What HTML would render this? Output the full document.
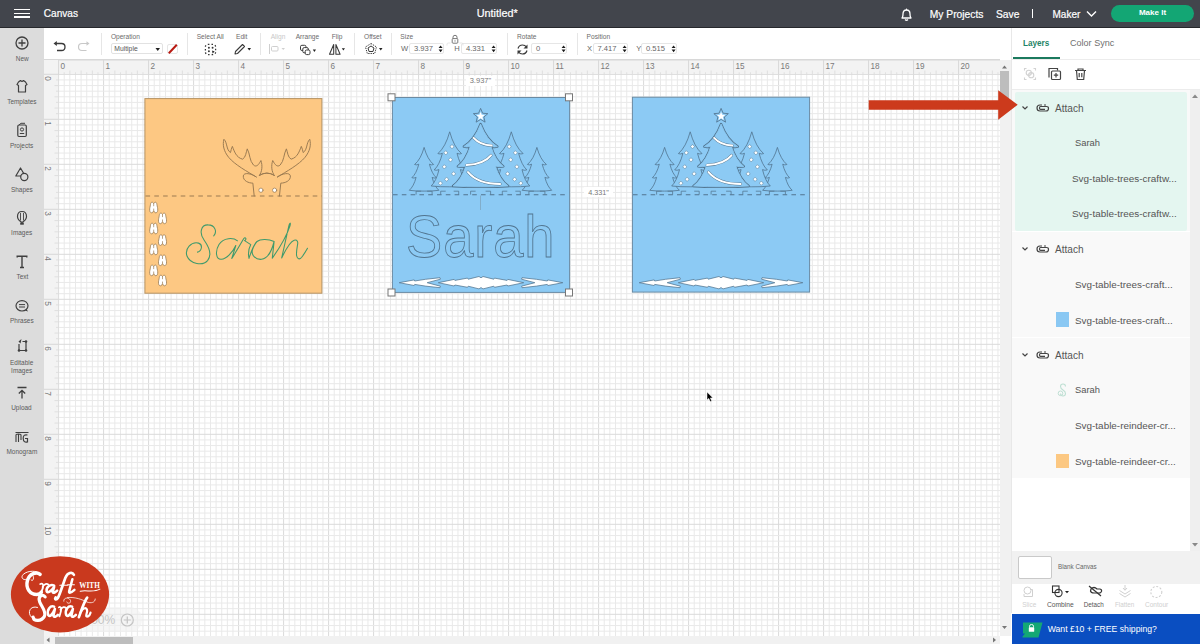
<!DOCTYPE html>
<html><head><meta charset="utf-8"><title>Canvas</title>
<style>
*{margin:0;padding:0;box-sizing:border-box}
html,body{width:1200px;height:644px;overflow:hidden;background:#fff;font-family:"Liberation Sans",sans-serif}
.abs{position:absolute}
.t{position:absolute;white-space:nowrap;line-height:1}
</style></head><body>
<svg class="abs" style="left:0;top:0" width="1200" height="644"><line x1="58.60" y1="74" x2="58.60" y2="636" stroke="#dadada" stroke-width="1.0"/><line x1="64.22" y1="74" x2="64.22" y2="636" stroke="#e9e9e9" stroke-width="1.0"/><line x1="69.85" y1="74" x2="69.85" y2="636" stroke="#e9e9e9" stroke-width="1.0"/><line x1="75.47" y1="74" x2="75.47" y2="636" stroke="#e9e9e9" stroke-width="1.0"/><line x1="81.10" y1="74" x2="81.10" y2="636" stroke="#e9e9e9" stroke-width="1.0"/><line x1="86.72" y1="74" x2="86.72" y2="636" stroke="#e9e9e9" stroke-width="1.0"/><line x1="92.35" y1="74" x2="92.35" y2="636" stroke="#e9e9e9" stroke-width="1.0"/><line x1="97.97" y1="74" x2="97.97" y2="636" stroke="#e9e9e9" stroke-width="1.0"/><line x1="103.60" y1="74" x2="103.60" y2="636" stroke="#dadada" stroke-width="1.0"/><line x1="109.22" y1="74" x2="109.22" y2="636" stroke="#e9e9e9" stroke-width="1.0"/><line x1="114.85" y1="74" x2="114.85" y2="636" stroke="#e9e9e9" stroke-width="1.0"/><line x1="120.47" y1="74" x2="120.47" y2="636" stroke="#e9e9e9" stroke-width="1.0"/><line x1="126.10" y1="74" x2="126.10" y2="636" stroke="#e9e9e9" stroke-width="1.0"/><line x1="131.72" y1="74" x2="131.72" y2="636" stroke="#e9e9e9" stroke-width="1.0"/><line x1="137.35" y1="74" x2="137.35" y2="636" stroke="#e9e9e9" stroke-width="1.0"/><line x1="142.97" y1="74" x2="142.97" y2="636" stroke="#e9e9e9" stroke-width="1.0"/><line x1="148.60" y1="74" x2="148.60" y2="636" stroke="#dadada" stroke-width="1.0"/><line x1="154.22" y1="74" x2="154.22" y2="636" stroke="#e9e9e9" stroke-width="1.0"/><line x1="159.85" y1="74" x2="159.85" y2="636" stroke="#e9e9e9" stroke-width="1.0"/><line x1="165.47" y1="74" x2="165.47" y2="636" stroke="#e9e9e9" stroke-width="1.0"/><line x1="171.10" y1="74" x2="171.10" y2="636" stroke="#e9e9e9" stroke-width="1.0"/><line x1="176.72" y1="74" x2="176.72" y2="636" stroke="#e9e9e9" stroke-width="1.0"/><line x1="182.35" y1="74" x2="182.35" y2="636" stroke="#e9e9e9" stroke-width="1.0"/><line x1="187.97" y1="74" x2="187.97" y2="636" stroke="#e9e9e9" stroke-width="1.0"/><line x1="193.60" y1="74" x2="193.60" y2="636" stroke="#dadada" stroke-width="1.0"/><line x1="199.22" y1="74" x2="199.22" y2="636" stroke="#e9e9e9" stroke-width="1.0"/><line x1="204.85" y1="74" x2="204.85" y2="636" stroke="#e9e9e9" stroke-width="1.0"/><line x1="210.47" y1="74" x2="210.47" y2="636" stroke="#e9e9e9" stroke-width="1.0"/><line x1="216.10" y1="74" x2="216.10" y2="636" stroke="#e9e9e9" stroke-width="1.0"/><line x1="221.72" y1="74" x2="221.72" y2="636" stroke="#e9e9e9" stroke-width="1.0"/><line x1="227.35" y1="74" x2="227.35" y2="636" stroke="#e9e9e9" stroke-width="1.0"/><line x1="232.97" y1="74" x2="232.97" y2="636" stroke="#e9e9e9" stroke-width="1.0"/><line x1="238.60" y1="74" x2="238.60" y2="636" stroke="#dadada" stroke-width="1.0"/><line x1="244.22" y1="74" x2="244.22" y2="636" stroke="#e9e9e9" stroke-width="1.0"/><line x1="249.85" y1="74" x2="249.85" y2="636" stroke="#e9e9e9" stroke-width="1.0"/><line x1="255.47" y1="74" x2="255.47" y2="636" stroke="#e9e9e9" stroke-width="1.0"/><line x1="261.10" y1="74" x2="261.10" y2="636" stroke="#e9e9e9" stroke-width="1.0"/><line x1="266.73" y1="74" x2="266.73" y2="636" stroke="#e9e9e9" stroke-width="1.0"/><line x1="272.35" y1="74" x2="272.35" y2="636" stroke="#e9e9e9" stroke-width="1.0"/><line x1="277.98" y1="74" x2="277.98" y2="636" stroke="#e9e9e9" stroke-width="1.0"/><line x1="283.60" y1="74" x2="283.60" y2="636" stroke="#dadada" stroke-width="1.0"/><line x1="289.23" y1="74" x2="289.23" y2="636" stroke="#e9e9e9" stroke-width="1.0"/><line x1="294.85" y1="74" x2="294.85" y2="636" stroke="#e9e9e9" stroke-width="1.0"/><line x1="300.48" y1="74" x2="300.48" y2="636" stroke="#e9e9e9" stroke-width="1.0"/><line x1="306.10" y1="74" x2="306.10" y2="636" stroke="#e9e9e9" stroke-width="1.0"/><line x1="311.73" y1="74" x2="311.73" y2="636" stroke="#e9e9e9" stroke-width="1.0"/><line x1="317.35" y1="74" x2="317.35" y2="636" stroke="#e9e9e9" stroke-width="1.0"/><line x1="322.98" y1="74" x2="322.98" y2="636" stroke="#e9e9e9" stroke-width="1.0"/><line x1="328.60" y1="74" x2="328.60" y2="636" stroke="#dadada" stroke-width="1.0"/><line x1="334.23" y1="74" x2="334.23" y2="636" stroke="#e9e9e9" stroke-width="1.0"/><line x1="339.85" y1="74" x2="339.85" y2="636" stroke="#e9e9e9" stroke-width="1.0"/><line x1="345.48" y1="74" x2="345.48" y2="636" stroke="#e9e9e9" stroke-width="1.0"/><line x1="351.10" y1="74" x2="351.10" y2="636" stroke="#e9e9e9" stroke-width="1.0"/><line x1="356.73" y1="74" x2="356.73" y2="636" stroke="#e9e9e9" stroke-width="1.0"/><line x1="362.35" y1="74" x2="362.35" y2="636" stroke="#e9e9e9" stroke-width="1.0"/><line x1="367.98" y1="74" x2="367.98" y2="636" stroke="#e9e9e9" stroke-width="1.0"/><line x1="373.60" y1="74" x2="373.60" y2="636" stroke="#dadada" stroke-width="1.0"/><line x1="379.23" y1="74" x2="379.23" y2="636" stroke="#e9e9e9" stroke-width="1.0"/><line x1="384.85" y1="74" x2="384.85" y2="636" stroke="#e9e9e9" stroke-width="1.0"/><line x1="390.48" y1="74" x2="390.48" y2="636" stroke="#e9e9e9" stroke-width="1.0"/><line x1="396.10" y1="74" x2="396.10" y2="636" stroke="#e9e9e9" stroke-width="1.0"/><line x1="401.73" y1="74" x2="401.73" y2="636" stroke="#e9e9e9" stroke-width="1.0"/><line x1="407.35" y1="74" x2="407.35" y2="636" stroke="#e9e9e9" stroke-width="1.0"/><line x1="412.98" y1="74" x2="412.98" y2="636" stroke="#e9e9e9" stroke-width="1.0"/><line x1="418.60" y1="74" x2="418.60" y2="636" stroke="#dadada" stroke-width="1.0"/><line x1="424.23" y1="74" x2="424.23" y2="636" stroke="#e9e9e9" stroke-width="1.0"/><line x1="429.85" y1="74" x2="429.85" y2="636" stroke="#e9e9e9" stroke-width="1.0"/><line x1="435.48" y1="74" x2="435.48" y2="636" stroke="#e9e9e9" stroke-width="1.0"/><line x1="441.10" y1="74" x2="441.10" y2="636" stroke="#e9e9e9" stroke-width="1.0"/><line x1="446.73" y1="74" x2="446.73" y2="636" stroke="#e9e9e9" stroke-width="1.0"/><line x1="452.35" y1="74" x2="452.35" y2="636" stroke="#e9e9e9" stroke-width="1.0"/><line x1="457.98" y1="74" x2="457.98" y2="636" stroke="#e9e9e9" stroke-width="1.0"/><line x1="463.60" y1="74" x2="463.60" y2="636" stroke="#dadada" stroke-width="1.0"/><line x1="469.23" y1="74" x2="469.23" y2="636" stroke="#e9e9e9" stroke-width="1.0"/><line x1="474.85" y1="74" x2="474.85" y2="636" stroke="#e9e9e9" stroke-width="1.0"/><line x1="480.48" y1="74" x2="480.48" y2="636" stroke="#e9e9e9" stroke-width="1.0"/><line x1="486.10" y1="74" x2="486.10" y2="636" stroke="#e9e9e9" stroke-width="1.0"/><line x1="491.73" y1="74" x2="491.73" y2="636" stroke="#e9e9e9" stroke-width="1.0"/><line x1="497.35" y1="74" x2="497.35" y2="636" stroke="#e9e9e9" stroke-width="1.0"/><line x1="502.98" y1="74" x2="502.98" y2="636" stroke="#e9e9e9" stroke-width="1.0"/><line x1="508.60" y1="74" x2="508.60" y2="636" stroke="#dadada" stroke-width="1.0"/><line x1="514.23" y1="74" x2="514.23" y2="636" stroke="#e9e9e9" stroke-width="1.0"/><line x1="519.85" y1="74" x2="519.85" y2="636" stroke="#e9e9e9" stroke-width="1.0"/><line x1="525.48" y1="74" x2="525.48" y2="636" stroke="#e9e9e9" stroke-width="1.0"/><line x1="531.10" y1="74" x2="531.10" y2="636" stroke="#e9e9e9" stroke-width="1.0"/><line x1="536.73" y1="74" x2="536.73" y2="636" stroke="#e9e9e9" stroke-width="1.0"/><line x1="542.35" y1="74" x2="542.35" y2="636" stroke="#e9e9e9" stroke-width="1.0"/><line x1="547.98" y1="74" x2="547.98" y2="636" stroke="#e9e9e9" stroke-width="1.0"/><line x1="553.60" y1="74" x2="553.60" y2="636" stroke="#dadada" stroke-width="1.0"/><line x1="559.23" y1="74" x2="559.23" y2="636" stroke="#e9e9e9" stroke-width="1.0"/><line x1="564.85" y1="74" x2="564.85" y2="636" stroke="#e9e9e9" stroke-width="1.0"/><line x1="570.48" y1="74" x2="570.48" y2="636" stroke="#e9e9e9" stroke-width="1.0"/><line x1="576.10" y1="74" x2="576.10" y2="636" stroke="#e9e9e9" stroke-width="1.0"/><line x1="581.73" y1="74" x2="581.73" y2="636" stroke="#e9e9e9" stroke-width="1.0"/><line x1="587.35" y1="74" x2="587.35" y2="636" stroke="#e9e9e9" stroke-width="1.0"/><line x1="592.98" y1="74" x2="592.98" y2="636" stroke="#e9e9e9" stroke-width="1.0"/><line x1="598.60" y1="74" x2="598.60" y2="636" stroke="#dadada" stroke-width="1.0"/><line x1="604.23" y1="74" x2="604.23" y2="636" stroke="#e9e9e9" stroke-width="1.0"/><line x1="609.85" y1="74" x2="609.85" y2="636" stroke="#e9e9e9" stroke-width="1.0"/><line x1="615.48" y1="74" x2="615.48" y2="636" stroke="#e9e9e9" stroke-width="1.0"/><line x1="621.10" y1="74" x2="621.10" y2="636" stroke="#e9e9e9" stroke-width="1.0"/><line x1="626.73" y1="74" x2="626.73" y2="636" stroke="#e9e9e9" stroke-width="1.0"/><line x1="632.35" y1="74" x2="632.35" y2="636" stroke="#e9e9e9" stroke-width="1.0"/><line x1="637.98" y1="74" x2="637.98" y2="636" stroke="#e9e9e9" stroke-width="1.0"/><line x1="643.60" y1="74" x2="643.60" y2="636" stroke="#dadada" stroke-width="1.0"/><line x1="649.23" y1="74" x2="649.23" y2="636" stroke="#e9e9e9" stroke-width="1.0"/><line x1="654.85" y1="74" x2="654.85" y2="636" stroke="#e9e9e9" stroke-width="1.0"/><line x1="660.48" y1="74" x2="660.48" y2="636" stroke="#e9e9e9" stroke-width="1.0"/><line x1="666.10" y1="74" x2="666.10" y2="636" stroke="#e9e9e9" stroke-width="1.0"/><line x1="671.73" y1="74" x2="671.73" y2="636" stroke="#e9e9e9" stroke-width="1.0"/><line x1="677.35" y1="74" x2="677.35" y2="636" stroke="#e9e9e9" stroke-width="1.0"/><line x1="682.98" y1="74" x2="682.98" y2="636" stroke="#e9e9e9" stroke-width="1.0"/><line x1="688.60" y1="74" x2="688.60" y2="636" stroke="#dadada" stroke-width="1.0"/><line x1="694.23" y1="74" x2="694.23" y2="636" stroke="#e9e9e9" stroke-width="1.0"/><line x1="699.85" y1="74" x2="699.85" y2="636" stroke="#e9e9e9" stroke-width="1.0"/><line x1="705.48" y1="74" x2="705.48" y2="636" stroke="#e9e9e9" stroke-width="1.0"/><line x1="711.10" y1="74" x2="711.10" y2="636" stroke="#e9e9e9" stroke-width="1.0"/><line x1="716.73" y1="74" x2="716.73" y2="636" stroke="#e9e9e9" stroke-width="1.0"/><line x1="722.35" y1="74" x2="722.35" y2="636" stroke="#e9e9e9" stroke-width="1.0"/><line x1="727.98" y1="74" x2="727.98" y2="636" stroke="#e9e9e9" stroke-width="1.0"/><line x1="733.60" y1="74" x2="733.60" y2="636" stroke="#dadada" stroke-width="1.0"/><line x1="739.23" y1="74" x2="739.23" y2="636" stroke="#e9e9e9" stroke-width="1.0"/><line x1="744.85" y1="74" x2="744.85" y2="636" stroke="#e9e9e9" stroke-width="1.0"/><line x1="750.48" y1="74" x2="750.48" y2="636" stroke="#e9e9e9" stroke-width="1.0"/><line x1="756.10" y1="74" x2="756.10" y2="636" stroke="#e9e9e9" stroke-width="1.0"/><line x1="761.73" y1="74" x2="761.73" y2="636" stroke="#e9e9e9" stroke-width="1.0"/><line x1="767.35" y1="74" x2="767.35" y2="636" stroke="#e9e9e9" stroke-width="1.0"/><line x1="772.98" y1="74" x2="772.98" y2="636" stroke="#e9e9e9" stroke-width="1.0"/><line x1="778.60" y1="74" x2="778.60" y2="636" stroke="#dadada" stroke-width="1.0"/><line x1="784.23" y1="74" x2="784.23" y2="636" stroke="#e9e9e9" stroke-width="1.0"/><line x1="789.85" y1="74" x2="789.85" y2="636" stroke="#e9e9e9" stroke-width="1.0"/><line x1="795.48" y1="74" x2="795.48" y2="636" stroke="#e9e9e9" stroke-width="1.0"/><line x1="801.10" y1="74" x2="801.10" y2="636" stroke="#e9e9e9" stroke-width="1.0"/><line x1="806.73" y1="74" x2="806.73" y2="636" stroke="#e9e9e9" stroke-width="1.0"/><line x1="812.35" y1="74" x2="812.35" y2="636" stroke="#e9e9e9" stroke-width="1.0"/><line x1="817.98" y1="74" x2="817.98" y2="636" stroke="#e9e9e9" stroke-width="1.0"/><line x1="823.60" y1="74" x2="823.60" y2="636" stroke="#dadada" stroke-width="1.0"/><line x1="829.23" y1="74" x2="829.23" y2="636" stroke="#e9e9e9" stroke-width="1.0"/><line x1="834.85" y1="74" x2="834.85" y2="636" stroke="#e9e9e9" stroke-width="1.0"/><line x1="840.48" y1="74" x2="840.48" y2="636" stroke="#e9e9e9" stroke-width="1.0"/><line x1="846.10" y1="74" x2="846.10" y2="636" stroke="#e9e9e9" stroke-width="1.0"/><line x1="851.73" y1="74" x2="851.73" y2="636" stroke="#e9e9e9" stroke-width="1.0"/><line x1="857.35" y1="74" x2="857.35" y2="636" stroke="#e9e9e9" stroke-width="1.0"/><line x1="862.98" y1="74" x2="862.98" y2="636" stroke="#e9e9e9" stroke-width="1.0"/><line x1="868.60" y1="74" x2="868.60" y2="636" stroke="#dadada" stroke-width="1.0"/><line x1="874.23" y1="74" x2="874.23" y2="636" stroke="#e9e9e9" stroke-width="1.0"/><line x1="879.85" y1="74" x2="879.85" y2="636" stroke="#e9e9e9" stroke-width="1.0"/><line x1="885.48" y1="74" x2="885.48" y2="636" stroke="#e9e9e9" stroke-width="1.0"/><line x1="891.10" y1="74" x2="891.10" y2="636" stroke="#e9e9e9" stroke-width="1.0"/><line x1="896.73" y1="74" x2="896.73" y2="636" stroke="#e9e9e9" stroke-width="1.0"/><line x1="902.35" y1="74" x2="902.35" y2="636" stroke="#e9e9e9" stroke-width="1.0"/><line x1="907.98" y1="74" x2="907.98" y2="636" stroke="#e9e9e9" stroke-width="1.0"/><line x1="913.60" y1="74" x2="913.60" y2="636" stroke="#dadada" stroke-width="1.0"/><line x1="919.23" y1="74" x2="919.23" y2="636" stroke="#e9e9e9" stroke-width="1.0"/><line x1="924.85" y1="74" x2="924.85" y2="636" stroke="#e9e9e9" stroke-width="1.0"/><line x1="930.48" y1="74" x2="930.48" y2="636" stroke="#e9e9e9" stroke-width="1.0"/><line x1="936.10" y1="74" x2="936.10" y2="636" stroke="#e9e9e9" stroke-width="1.0"/><line x1="941.73" y1="74" x2="941.73" y2="636" stroke="#e9e9e9" stroke-width="1.0"/><line x1="947.35" y1="74" x2="947.35" y2="636" stroke="#e9e9e9" stroke-width="1.0"/><line x1="952.98" y1="74" x2="952.98" y2="636" stroke="#e9e9e9" stroke-width="1.0"/><line x1="958.60" y1="74" x2="958.60" y2="636" stroke="#dadada" stroke-width="1.0"/><line x1="964.23" y1="74" x2="964.23" y2="636" stroke="#e9e9e9" stroke-width="1.0"/><line x1="969.85" y1="74" x2="969.85" y2="636" stroke="#e9e9e9" stroke-width="1.0"/><line x1="975.48" y1="74" x2="975.48" y2="636" stroke="#e9e9e9" stroke-width="1.0"/><line x1="981.10" y1="74" x2="981.10" y2="636" stroke="#e9e9e9" stroke-width="1.0"/><line x1="986.73" y1="74" x2="986.73" y2="636" stroke="#e9e9e9" stroke-width="1.0"/><line x1="992.35" y1="74" x2="992.35" y2="636" stroke="#e9e9e9" stroke-width="1.0"/><line x1="997.98" y1="74" x2="997.98" y2="636" stroke="#e9e9e9" stroke-width="1.0"/><line x1="58" y1="74.30" x2="1000" y2="74.30" stroke="#dadada" stroke-width="1.0"/><line x1="58" y1="79.92" x2="1000" y2="79.92" stroke="#e9e9e9" stroke-width="1.0"/><line x1="58" y1="85.55" x2="1000" y2="85.55" stroke="#e9e9e9" stroke-width="1.0"/><line x1="58" y1="91.17" x2="1000" y2="91.17" stroke="#e9e9e9" stroke-width="1.0"/><line x1="58" y1="96.80" x2="1000" y2="96.80" stroke="#e9e9e9" stroke-width="1.0"/><line x1="58" y1="102.42" x2="1000" y2="102.42" stroke="#e9e9e9" stroke-width="1.0"/><line x1="58" y1="108.05" x2="1000" y2="108.05" stroke="#e9e9e9" stroke-width="1.0"/><line x1="58" y1="113.67" x2="1000" y2="113.67" stroke="#e9e9e9" stroke-width="1.0"/><line x1="58" y1="119.30" x2="1000" y2="119.30" stroke="#dadada" stroke-width="1.0"/><line x1="58" y1="124.92" x2="1000" y2="124.92" stroke="#e9e9e9" stroke-width="1.0"/><line x1="58" y1="130.55" x2="1000" y2="130.55" stroke="#e9e9e9" stroke-width="1.0"/><line x1="58" y1="136.18" x2="1000" y2="136.18" stroke="#e9e9e9" stroke-width="1.0"/><line x1="58" y1="141.80" x2="1000" y2="141.80" stroke="#e9e9e9" stroke-width="1.0"/><line x1="58" y1="147.43" x2="1000" y2="147.43" stroke="#e9e9e9" stroke-width="1.0"/><line x1="58" y1="153.05" x2="1000" y2="153.05" stroke="#e9e9e9" stroke-width="1.0"/><line x1="58" y1="158.68" x2="1000" y2="158.68" stroke="#e9e9e9" stroke-width="1.0"/><line x1="58" y1="164.30" x2="1000" y2="164.30" stroke="#dadada" stroke-width="1.0"/><line x1="58" y1="169.93" x2="1000" y2="169.93" stroke="#e9e9e9" stroke-width="1.0"/><line x1="58" y1="175.55" x2="1000" y2="175.55" stroke="#e9e9e9" stroke-width="1.0"/><line x1="58" y1="181.18" x2="1000" y2="181.18" stroke="#e9e9e9" stroke-width="1.0"/><line x1="58" y1="186.80" x2="1000" y2="186.80" stroke="#e9e9e9" stroke-width="1.0"/><line x1="58" y1="192.43" x2="1000" y2="192.43" stroke="#e9e9e9" stroke-width="1.0"/><line x1="58" y1="198.05" x2="1000" y2="198.05" stroke="#e9e9e9" stroke-width="1.0"/><line x1="58" y1="203.68" x2="1000" y2="203.68" stroke="#e9e9e9" stroke-width="1.0"/><line x1="58" y1="209.30" x2="1000" y2="209.30" stroke="#dadada" stroke-width="1.0"/><line x1="58" y1="214.93" x2="1000" y2="214.93" stroke="#e9e9e9" stroke-width="1.0"/><line x1="58" y1="220.55" x2="1000" y2="220.55" stroke="#e9e9e9" stroke-width="1.0"/><line x1="58" y1="226.18" x2="1000" y2="226.18" stroke="#e9e9e9" stroke-width="1.0"/><line x1="58" y1="231.80" x2="1000" y2="231.80" stroke="#e9e9e9" stroke-width="1.0"/><line x1="58" y1="237.43" x2="1000" y2="237.43" stroke="#e9e9e9" stroke-width="1.0"/><line x1="58" y1="243.05" x2="1000" y2="243.05" stroke="#e9e9e9" stroke-width="1.0"/><line x1="58" y1="248.68" x2="1000" y2="248.68" stroke="#e9e9e9" stroke-width="1.0"/><line x1="58" y1="254.30" x2="1000" y2="254.30" stroke="#dadada" stroke-width="1.0"/><line x1="58" y1="259.93" x2="1000" y2="259.93" stroke="#e9e9e9" stroke-width="1.0"/><line x1="58" y1="265.55" x2="1000" y2="265.55" stroke="#e9e9e9" stroke-width="1.0"/><line x1="58" y1="271.18" x2="1000" y2="271.18" stroke="#e9e9e9" stroke-width="1.0"/><line x1="58" y1="276.80" x2="1000" y2="276.80" stroke="#e9e9e9" stroke-width="1.0"/><line x1="58" y1="282.43" x2="1000" y2="282.43" stroke="#e9e9e9" stroke-width="1.0"/><line x1="58" y1="288.05" x2="1000" y2="288.05" stroke="#e9e9e9" stroke-width="1.0"/><line x1="58" y1="293.68" x2="1000" y2="293.68" stroke="#e9e9e9" stroke-width="1.0"/><line x1="58" y1="299.30" x2="1000" y2="299.30" stroke="#dadada" stroke-width="1.0"/><line x1="58" y1="304.93" x2="1000" y2="304.93" stroke="#e9e9e9" stroke-width="1.0"/><line x1="58" y1="310.55" x2="1000" y2="310.55" stroke="#e9e9e9" stroke-width="1.0"/><line x1="58" y1="316.18" x2="1000" y2="316.18" stroke="#e9e9e9" stroke-width="1.0"/><line x1="58" y1="321.80" x2="1000" y2="321.80" stroke="#e9e9e9" stroke-width="1.0"/><line x1="58" y1="327.43" x2="1000" y2="327.43" stroke="#e9e9e9" stroke-width="1.0"/><line x1="58" y1="333.05" x2="1000" y2="333.05" stroke="#e9e9e9" stroke-width="1.0"/><line x1="58" y1="338.68" x2="1000" y2="338.68" stroke="#e9e9e9" stroke-width="1.0"/><line x1="58" y1="344.30" x2="1000" y2="344.30" stroke="#dadada" stroke-width="1.0"/><line x1="58" y1="349.93" x2="1000" y2="349.93" stroke="#e9e9e9" stroke-width="1.0"/><line x1="58" y1="355.55" x2="1000" y2="355.55" stroke="#e9e9e9" stroke-width="1.0"/><line x1="58" y1="361.18" x2="1000" y2="361.18" stroke="#e9e9e9" stroke-width="1.0"/><line x1="58" y1="366.80" x2="1000" y2="366.80" stroke="#e9e9e9" stroke-width="1.0"/><line x1="58" y1="372.43" x2="1000" y2="372.43" stroke="#e9e9e9" stroke-width="1.0"/><line x1="58" y1="378.05" x2="1000" y2="378.05" stroke="#e9e9e9" stroke-width="1.0"/><line x1="58" y1="383.68" x2="1000" y2="383.68" stroke="#e9e9e9" stroke-width="1.0"/><line x1="58" y1="389.30" x2="1000" y2="389.30" stroke="#dadada" stroke-width="1.0"/><line x1="58" y1="394.93" x2="1000" y2="394.93" stroke="#e9e9e9" stroke-width="1.0"/><line x1="58" y1="400.55" x2="1000" y2="400.55" stroke="#e9e9e9" stroke-width="1.0"/><line x1="58" y1="406.18" x2="1000" y2="406.18" stroke="#e9e9e9" stroke-width="1.0"/><line x1="58" y1="411.80" x2="1000" y2="411.80" stroke="#e9e9e9" stroke-width="1.0"/><line x1="58" y1="417.43" x2="1000" y2="417.43" stroke="#e9e9e9" stroke-width="1.0"/><line x1="58" y1="423.05" x2="1000" y2="423.05" stroke="#e9e9e9" stroke-width="1.0"/><line x1="58" y1="428.68" x2="1000" y2="428.68" stroke="#e9e9e9" stroke-width="1.0"/><line x1="58" y1="434.30" x2="1000" y2="434.30" stroke="#dadada" stroke-width="1.0"/><line x1="58" y1="439.93" x2="1000" y2="439.93" stroke="#e9e9e9" stroke-width="1.0"/><line x1="58" y1="445.55" x2="1000" y2="445.55" stroke="#e9e9e9" stroke-width="1.0"/><line x1="58" y1="451.18" x2="1000" y2="451.18" stroke="#e9e9e9" stroke-width="1.0"/><line x1="58" y1="456.80" x2="1000" y2="456.80" stroke="#e9e9e9" stroke-width="1.0"/><line x1="58" y1="462.43" x2="1000" y2="462.43" stroke="#e9e9e9" stroke-width="1.0"/><line x1="58" y1="468.05" x2="1000" y2="468.05" stroke="#e9e9e9" stroke-width="1.0"/><line x1="58" y1="473.68" x2="1000" y2="473.68" stroke="#e9e9e9" stroke-width="1.0"/><line x1="58" y1="479.30" x2="1000" y2="479.30" stroke="#dadada" stroke-width="1.0"/><line x1="58" y1="484.93" x2="1000" y2="484.93" stroke="#e9e9e9" stroke-width="1.0"/><line x1="58" y1="490.55" x2="1000" y2="490.55" stroke="#e9e9e9" stroke-width="1.0"/><line x1="58" y1="496.18" x2="1000" y2="496.18" stroke="#e9e9e9" stroke-width="1.0"/><line x1="58" y1="501.80" x2="1000" y2="501.80" stroke="#e9e9e9" stroke-width="1.0"/><line x1="58" y1="507.43" x2="1000" y2="507.43" stroke="#e9e9e9" stroke-width="1.0"/><line x1="58" y1="513.05" x2="1000" y2="513.05" stroke="#e9e9e9" stroke-width="1.0"/><line x1="58" y1="518.67" x2="1000" y2="518.67" stroke="#e9e9e9" stroke-width="1.0"/><line x1="58" y1="524.30" x2="1000" y2="524.30" stroke="#dadada" stroke-width="1.0"/><line x1="58" y1="529.92" x2="1000" y2="529.92" stroke="#e9e9e9" stroke-width="1.0"/><line x1="58" y1="535.55" x2="1000" y2="535.55" stroke="#e9e9e9" stroke-width="1.0"/><line x1="58" y1="541.17" x2="1000" y2="541.17" stroke="#e9e9e9" stroke-width="1.0"/><line x1="58" y1="546.80" x2="1000" y2="546.80" stroke="#e9e9e9" stroke-width="1.0"/><line x1="58" y1="552.42" x2="1000" y2="552.42" stroke="#e9e9e9" stroke-width="1.0"/><line x1="58" y1="558.05" x2="1000" y2="558.05" stroke="#e9e9e9" stroke-width="1.0"/><line x1="58" y1="563.67" x2="1000" y2="563.67" stroke="#e9e9e9" stroke-width="1.0"/><line x1="58" y1="569.30" x2="1000" y2="569.30" stroke="#dadada" stroke-width="1.0"/><line x1="58" y1="574.92" x2="1000" y2="574.92" stroke="#e9e9e9" stroke-width="1.0"/><line x1="58" y1="580.55" x2="1000" y2="580.55" stroke="#e9e9e9" stroke-width="1.0"/><line x1="58" y1="586.17" x2="1000" y2="586.17" stroke="#e9e9e9" stroke-width="1.0"/><line x1="58" y1="591.80" x2="1000" y2="591.80" stroke="#e9e9e9" stroke-width="1.0"/><line x1="58" y1="597.42" x2="1000" y2="597.42" stroke="#e9e9e9" stroke-width="1.0"/><line x1="58" y1="603.05" x2="1000" y2="603.05" stroke="#e9e9e9" stroke-width="1.0"/><line x1="58" y1="608.67" x2="1000" y2="608.67" stroke="#e9e9e9" stroke-width="1.0"/><line x1="58" y1="614.30" x2="1000" y2="614.30" stroke="#dadada" stroke-width="1.0"/><line x1="58" y1="619.92" x2="1000" y2="619.92" stroke="#e9e9e9" stroke-width="1.0"/><line x1="58" y1="625.55" x2="1000" y2="625.55" stroke="#e9e9e9" stroke-width="1.0"/><line x1="58" y1="631.17" x2="1000" y2="631.17" stroke="#e9e9e9" stroke-width="1.0"/></svg><svg class="abs" style="left:0;top:0" width="1200" height="644"><rect x="43" y="59.5" width="957" height="15" fill="#f3f3f3"/><rect x="43" y="59" width="957" height="1.5" fill="#d8d8d8"/><rect x="58" y="74" width="942" height="0.8" fill="#dcdcdc"/><rect x="43" y="60" width="15.5" height="576" fill="#f3f3f3"/><rect x="58" y="74" width="0.8" height="562" fill="#dcdcdc"/><line x1="58.60" y1="60" x2="58.60" y2="74.5" stroke="#d8d8d8" stroke-width="1"/><text x="60.40" y="68.8" font-size="8.2" fill="#7a7a7a" font-family="Liberation Sans">0</text><line x1="64.22" y1="72.3" x2="64.22" y2="74.5" stroke="#dadada" stroke-width="0.8"/><line x1="69.85" y1="70.5" x2="69.85" y2="74.5" stroke="#dadada" stroke-width="0.8"/><line x1="75.47" y1="72.3" x2="75.47" y2="74.5" stroke="#dadada" stroke-width="0.8"/><line x1="81.10" y1="70.5" x2="81.10" y2="74.5" stroke="#dadada" stroke-width="0.8"/><line x1="86.72" y1="72.3" x2="86.72" y2="74.5" stroke="#dadada" stroke-width="0.8"/><line x1="92.35" y1="70.5" x2="92.35" y2="74.5" stroke="#dadada" stroke-width="0.8"/><line x1="97.97" y1="72.3" x2="97.97" y2="74.5" stroke="#dadada" stroke-width="0.8"/><line x1="103.60" y1="60" x2="103.60" y2="74.5" stroke="#d8d8d8" stroke-width="1"/><text x="105.40" y="68.8" font-size="8.2" fill="#7a7a7a" font-family="Liberation Sans">1</text><line x1="109.22" y1="72.3" x2="109.22" y2="74.5" stroke="#dadada" stroke-width="0.8"/><line x1="114.85" y1="70.5" x2="114.85" y2="74.5" stroke="#dadada" stroke-width="0.8"/><line x1="120.47" y1="72.3" x2="120.47" y2="74.5" stroke="#dadada" stroke-width="0.8"/><line x1="126.10" y1="70.5" x2="126.10" y2="74.5" stroke="#dadada" stroke-width="0.8"/><line x1="131.72" y1="72.3" x2="131.72" y2="74.5" stroke="#dadada" stroke-width="0.8"/><line x1="137.35" y1="70.5" x2="137.35" y2="74.5" stroke="#dadada" stroke-width="0.8"/><line x1="142.97" y1="72.3" x2="142.97" y2="74.5" stroke="#dadada" stroke-width="0.8"/><line x1="148.60" y1="60" x2="148.60" y2="74.5" stroke="#d8d8d8" stroke-width="1"/><text x="150.40" y="68.8" font-size="8.2" fill="#7a7a7a" font-family="Liberation Sans">2</text><line x1="154.22" y1="72.3" x2="154.22" y2="74.5" stroke="#dadada" stroke-width="0.8"/><line x1="159.85" y1="70.5" x2="159.85" y2="74.5" stroke="#dadada" stroke-width="0.8"/><line x1="165.47" y1="72.3" x2="165.47" y2="74.5" stroke="#dadada" stroke-width="0.8"/><line x1="171.10" y1="70.5" x2="171.10" y2="74.5" stroke="#dadada" stroke-width="0.8"/><line x1="176.72" y1="72.3" x2="176.72" y2="74.5" stroke="#dadada" stroke-width="0.8"/><line x1="182.35" y1="70.5" x2="182.35" y2="74.5" stroke="#dadada" stroke-width="0.8"/><line x1="187.97" y1="72.3" x2="187.97" y2="74.5" stroke="#dadada" stroke-width="0.8"/><line x1="193.60" y1="60" x2="193.60" y2="74.5" stroke="#d8d8d8" stroke-width="1"/><text x="195.40" y="68.8" font-size="8.2" fill="#7a7a7a" font-family="Liberation Sans">3</text><line x1="199.22" y1="72.3" x2="199.22" y2="74.5" stroke="#dadada" stroke-width="0.8"/><line x1="204.85" y1="70.5" x2="204.85" y2="74.5" stroke="#dadada" stroke-width="0.8"/><line x1="210.47" y1="72.3" x2="210.47" y2="74.5" stroke="#dadada" stroke-width="0.8"/><line x1="216.10" y1="70.5" x2="216.10" y2="74.5" stroke="#dadada" stroke-width="0.8"/><line x1="221.72" y1="72.3" x2="221.72" y2="74.5" stroke="#dadada" stroke-width="0.8"/><line x1="227.35" y1="70.5" x2="227.35" y2="74.5" stroke="#dadada" stroke-width="0.8"/><line x1="232.97" y1="72.3" x2="232.97" y2="74.5" stroke="#dadada" stroke-width="0.8"/><line x1="238.60" y1="60" x2="238.60" y2="74.5" stroke="#d8d8d8" stroke-width="1"/><text x="240.40" y="68.8" font-size="8.2" fill="#7a7a7a" font-family="Liberation Sans">4</text><line x1="244.22" y1="72.3" x2="244.22" y2="74.5" stroke="#dadada" stroke-width="0.8"/><line x1="249.85" y1="70.5" x2="249.85" y2="74.5" stroke="#dadada" stroke-width="0.8"/><line x1="255.47" y1="72.3" x2="255.47" y2="74.5" stroke="#dadada" stroke-width="0.8"/><line x1="261.10" y1="70.5" x2="261.10" y2="74.5" stroke="#dadada" stroke-width="0.8"/><line x1="266.73" y1="72.3" x2="266.73" y2="74.5" stroke="#dadada" stroke-width="0.8"/><line x1="272.35" y1="70.5" x2="272.35" y2="74.5" stroke="#dadada" stroke-width="0.8"/><line x1="277.98" y1="72.3" x2="277.98" y2="74.5" stroke="#dadada" stroke-width="0.8"/><line x1="283.60" y1="60" x2="283.60" y2="74.5" stroke="#d8d8d8" stroke-width="1"/><text x="285.40" y="68.8" font-size="8.2" fill="#7a7a7a" font-family="Liberation Sans">5</text><line x1="289.23" y1="72.3" x2="289.23" y2="74.5" stroke="#dadada" stroke-width="0.8"/><line x1="294.85" y1="70.5" x2="294.85" y2="74.5" stroke="#dadada" stroke-width="0.8"/><line x1="300.48" y1="72.3" x2="300.48" y2="74.5" stroke="#dadada" stroke-width="0.8"/><line x1="306.10" y1="70.5" x2="306.10" y2="74.5" stroke="#dadada" stroke-width="0.8"/><line x1="311.73" y1="72.3" x2="311.73" y2="74.5" stroke="#dadada" stroke-width="0.8"/><line x1="317.35" y1="70.5" x2="317.35" y2="74.5" stroke="#dadada" stroke-width="0.8"/><line x1="322.98" y1="72.3" x2="322.98" y2="74.5" stroke="#dadada" stroke-width="0.8"/><line x1="328.60" y1="60" x2="328.60" y2="74.5" stroke="#d8d8d8" stroke-width="1"/><text x="330.40" y="68.8" font-size="8.2" fill="#7a7a7a" font-family="Liberation Sans">6</text><line x1="334.23" y1="72.3" x2="334.23" y2="74.5" stroke="#dadada" stroke-width="0.8"/><line x1="339.85" y1="70.5" x2="339.85" y2="74.5" stroke="#dadada" stroke-width="0.8"/><line x1="345.48" y1="72.3" x2="345.48" y2="74.5" stroke="#dadada" stroke-width="0.8"/><line x1="351.10" y1="70.5" x2="351.10" y2="74.5" stroke="#dadada" stroke-width="0.8"/><line x1="356.73" y1="72.3" x2="356.73" y2="74.5" stroke="#dadada" stroke-width="0.8"/><line x1="362.35" y1="70.5" x2="362.35" y2="74.5" stroke="#dadada" stroke-width="0.8"/><line x1="367.98" y1="72.3" x2="367.98" y2="74.5" stroke="#dadada" stroke-width="0.8"/><line x1="373.60" y1="60" x2="373.60" y2="74.5" stroke="#d8d8d8" stroke-width="1"/><text x="375.40" y="68.8" font-size="8.2" fill="#7a7a7a" font-family="Liberation Sans">7</text><line x1="379.23" y1="72.3" x2="379.23" y2="74.5" stroke="#dadada" stroke-width="0.8"/><line x1="384.85" y1="70.5" x2="384.85" y2="74.5" stroke="#dadada" stroke-width="0.8"/><line x1="390.48" y1="72.3" x2="390.48" y2="74.5" stroke="#dadada" stroke-width="0.8"/><line x1="396.10" y1="70.5" x2="396.10" y2="74.5" stroke="#dadada" stroke-width="0.8"/><line x1="401.73" y1="72.3" x2="401.73" y2="74.5" stroke="#dadada" stroke-width="0.8"/><line x1="407.35" y1="70.5" x2="407.35" y2="74.5" stroke="#dadada" stroke-width="0.8"/><line x1="412.98" y1="72.3" x2="412.98" y2="74.5" stroke="#dadada" stroke-width="0.8"/><line x1="418.60" y1="60" x2="418.60" y2="74.5" stroke="#d8d8d8" stroke-width="1"/><text x="420.40" y="68.8" font-size="8.2" fill="#7a7a7a" font-family="Liberation Sans">8</text><line x1="424.23" y1="72.3" x2="424.23" y2="74.5" stroke="#dadada" stroke-width="0.8"/><line x1="429.85" y1="70.5" x2="429.85" y2="74.5" stroke="#dadada" stroke-width="0.8"/><line x1="435.48" y1="72.3" x2="435.48" y2="74.5" stroke="#dadada" stroke-width="0.8"/><line x1="441.10" y1="70.5" x2="441.10" y2="74.5" stroke="#dadada" stroke-width="0.8"/><line x1="446.73" y1="72.3" x2="446.73" y2="74.5" stroke="#dadada" stroke-width="0.8"/><line x1="452.35" y1="70.5" x2="452.35" y2="74.5" stroke="#dadada" stroke-width="0.8"/><line x1="457.98" y1="72.3" x2="457.98" y2="74.5" stroke="#dadada" stroke-width="0.8"/><line x1="463.60" y1="60" x2="463.60" y2="74.5" stroke="#d8d8d8" stroke-width="1"/><text x="465.40" y="68.8" font-size="8.2" fill="#7a7a7a" font-family="Liberation Sans">9</text><line x1="469.23" y1="72.3" x2="469.23" y2="74.5" stroke="#dadada" stroke-width="0.8"/><line x1="474.85" y1="70.5" x2="474.85" y2="74.5" stroke="#dadada" stroke-width="0.8"/><line x1="480.48" y1="72.3" x2="480.48" y2="74.5" stroke="#dadada" stroke-width="0.8"/><line x1="486.10" y1="70.5" x2="486.10" y2="74.5" stroke="#dadada" stroke-width="0.8"/><line x1="491.73" y1="72.3" x2="491.73" y2="74.5" stroke="#dadada" stroke-width="0.8"/><line x1="497.35" y1="70.5" x2="497.35" y2="74.5" stroke="#dadada" stroke-width="0.8"/><line x1="502.98" y1="72.3" x2="502.98" y2="74.5" stroke="#dadada" stroke-width="0.8"/><line x1="508.60" y1="60" x2="508.60" y2="74.5" stroke="#d8d8d8" stroke-width="1"/><text x="510.40" y="68.8" font-size="8.2" fill="#7a7a7a" font-family="Liberation Sans">10</text><line x1="514.23" y1="72.3" x2="514.23" y2="74.5" stroke="#dadada" stroke-width="0.8"/><line x1="519.85" y1="70.5" x2="519.85" y2="74.5" stroke="#dadada" stroke-width="0.8"/><line x1="525.48" y1="72.3" x2="525.48" y2="74.5" stroke="#dadada" stroke-width="0.8"/><line x1="531.10" y1="70.5" x2="531.10" y2="74.5" stroke="#dadada" stroke-width="0.8"/><line x1="536.73" y1="72.3" x2="536.73" y2="74.5" stroke="#dadada" stroke-width="0.8"/><line x1="542.35" y1="70.5" x2="542.35" y2="74.5" stroke="#dadada" stroke-width="0.8"/><line x1="547.98" y1="72.3" x2="547.98" y2="74.5" stroke="#dadada" stroke-width="0.8"/><line x1="553.60" y1="60" x2="553.60" y2="74.5" stroke="#d8d8d8" stroke-width="1"/><text x="555.40" y="68.8" font-size="8.2" fill="#7a7a7a" font-family="Liberation Sans">11</text><line x1="559.23" y1="72.3" x2="559.23" y2="74.5" stroke="#dadada" stroke-width="0.8"/><line x1="564.85" y1="70.5" x2="564.85" y2="74.5" stroke="#dadada" stroke-width="0.8"/><line x1="570.48" y1="72.3" x2="570.48" y2="74.5" stroke="#dadada" stroke-width="0.8"/><line x1="576.10" y1="70.5" x2="576.10" y2="74.5" stroke="#dadada" stroke-width="0.8"/><line x1="581.73" y1="72.3" x2="581.73" y2="74.5" stroke="#dadada" stroke-width="0.8"/><line x1="587.35" y1="70.5" x2="587.35" y2="74.5" stroke="#dadada" stroke-width="0.8"/><line x1="592.98" y1="72.3" x2="592.98" y2="74.5" stroke="#dadada" stroke-width="0.8"/><line x1="598.60" y1="60" x2="598.60" y2="74.5" stroke="#d8d8d8" stroke-width="1"/><text x="600.40" y="68.8" font-size="8.2" fill="#7a7a7a" font-family="Liberation Sans">12</text><line x1="604.23" y1="72.3" x2="604.23" y2="74.5" stroke="#dadada" stroke-width="0.8"/><line x1="609.85" y1="70.5" x2="609.85" y2="74.5" stroke="#dadada" stroke-width="0.8"/><line x1="615.48" y1="72.3" x2="615.48" y2="74.5" stroke="#dadada" stroke-width="0.8"/><line x1="621.10" y1="70.5" x2="621.10" y2="74.5" stroke="#dadada" stroke-width="0.8"/><line x1="626.73" y1="72.3" x2="626.73" y2="74.5" stroke="#dadada" stroke-width="0.8"/><line x1="632.35" y1="70.5" x2="632.35" y2="74.5" stroke="#dadada" stroke-width="0.8"/><line x1="637.98" y1="72.3" x2="637.98" y2="74.5" stroke="#dadada" stroke-width="0.8"/><line x1="643.60" y1="60" x2="643.60" y2="74.5" stroke="#d8d8d8" stroke-width="1"/><text x="645.40" y="68.8" font-size="8.2" fill="#7a7a7a" font-family="Liberation Sans">13</text><line x1="649.23" y1="72.3" x2="649.23" y2="74.5" stroke="#dadada" stroke-width="0.8"/><line x1="654.85" y1="70.5" x2="654.85" y2="74.5" stroke="#dadada" stroke-width="0.8"/><line x1="660.48" y1="72.3" x2="660.48" y2="74.5" stroke="#dadada" stroke-width="0.8"/><line x1="666.10" y1="70.5" x2="666.10" y2="74.5" stroke="#dadada" stroke-width="0.8"/><line x1="671.73" y1="72.3" x2="671.73" y2="74.5" stroke="#dadada" stroke-width="0.8"/><line x1="677.35" y1="70.5" x2="677.35" y2="74.5" stroke="#dadada" stroke-width="0.8"/><line x1="682.98" y1="72.3" x2="682.98" y2="74.5" stroke="#dadada" stroke-width="0.8"/><line x1="688.60" y1="60" x2="688.60" y2="74.5" stroke="#d8d8d8" stroke-width="1"/><text x="690.40" y="68.8" font-size="8.2" fill="#7a7a7a" font-family="Liberation Sans">14</text><line x1="694.23" y1="72.3" x2="694.23" y2="74.5" stroke="#dadada" stroke-width="0.8"/><line x1="699.85" y1="70.5" x2="699.85" y2="74.5" stroke="#dadada" stroke-width="0.8"/><line x1="705.48" y1="72.3" x2="705.48" y2="74.5" stroke="#dadada" stroke-width="0.8"/><line x1="711.10" y1="70.5" x2="711.10" y2="74.5" stroke="#dadada" stroke-width="0.8"/><line x1="716.73" y1="72.3" x2="716.73" y2="74.5" stroke="#dadada" stroke-width="0.8"/><line x1="722.35" y1="70.5" x2="722.35" y2="74.5" stroke="#dadada" stroke-width="0.8"/><line x1="727.98" y1="72.3" x2="727.98" y2="74.5" stroke="#dadada" stroke-width="0.8"/><line x1="733.60" y1="60" x2="733.60" y2="74.5" stroke="#d8d8d8" stroke-width="1"/><text x="735.40" y="68.8" font-size="8.2" fill="#7a7a7a" font-family="Liberation Sans">15</text><line x1="739.23" y1="72.3" x2="739.23" y2="74.5" stroke="#dadada" stroke-width="0.8"/><line x1="744.85" y1="70.5" x2="744.85" y2="74.5" stroke="#dadada" stroke-width="0.8"/><line x1="750.48" y1="72.3" x2="750.48" y2="74.5" stroke="#dadada" stroke-width="0.8"/><line x1="756.10" y1="70.5" x2="756.10" y2="74.5" stroke="#dadada" stroke-width="0.8"/><line x1="761.73" y1="72.3" x2="761.73" y2="74.5" stroke="#dadada" stroke-width="0.8"/><line x1="767.35" y1="70.5" x2="767.35" y2="74.5" stroke="#dadada" stroke-width="0.8"/><line x1="772.98" y1="72.3" x2="772.98" y2="74.5" stroke="#dadada" stroke-width="0.8"/><line x1="778.60" y1="60" x2="778.60" y2="74.5" stroke="#d8d8d8" stroke-width="1"/><text x="780.40" y="68.8" font-size="8.2" fill="#7a7a7a" font-family="Liberation Sans">16</text><line x1="784.23" y1="72.3" x2="784.23" y2="74.5" stroke="#dadada" stroke-width="0.8"/><line x1="789.85" y1="70.5" x2="789.85" y2="74.5" stroke="#dadada" stroke-width="0.8"/><line x1="795.48" y1="72.3" x2="795.48" y2="74.5" stroke="#dadada" stroke-width="0.8"/><line x1="801.10" y1="70.5" x2="801.10" y2="74.5" stroke="#dadada" stroke-width="0.8"/><line x1="806.73" y1="72.3" x2="806.73" y2="74.5" stroke="#dadada" stroke-width="0.8"/><line x1="812.35" y1="70.5" x2="812.35" y2="74.5" stroke="#dadada" stroke-width="0.8"/><line x1="817.98" y1="72.3" x2="817.98" y2="74.5" stroke="#dadada" stroke-width="0.8"/><line x1="823.60" y1="60" x2="823.60" y2="74.5" stroke="#d8d8d8" stroke-width="1"/><text x="825.40" y="68.8" font-size="8.2" fill="#7a7a7a" font-family="Liberation Sans">17</text><line x1="829.23" y1="72.3" x2="829.23" y2="74.5" stroke="#dadada" stroke-width="0.8"/><line x1="834.85" y1="70.5" x2="834.85" y2="74.5" stroke="#dadada" stroke-width="0.8"/><line x1="840.48" y1="72.3" x2="840.48" y2="74.5" stroke="#dadada" stroke-width="0.8"/><line x1="846.10" y1="70.5" x2="846.10" y2="74.5" stroke="#dadada" stroke-width="0.8"/><line x1="851.73" y1="72.3" x2="851.73" y2="74.5" stroke="#dadada" stroke-width="0.8"/><line x1="857.35" y1="70.5" x2="857.35" y2="74.5" stroke="#dadada" stroke-width="0.8"/><line x1="862.98" y1="72.3" x2="862.98" y2="74.5" stroke="#dadada" stroke-width="0.8"/><line x1="868.60" y1="60" x2="868.60" y2="74.5" stroke="#d8d8d8" stroke-width="1"/><text x="870.40" y="68.8" font-size="8.2" fill="#7a7a7a" font-family="Liberation Sans">18</text><line x1="874.23" y1="72.3" x2="874.23" y2="74.5" stroke="#dadada" stroke-width="0.8"/><line x1="879.85" y1="70.5" x2="879.85" y2="74.5" stroke="#dadada" stroke-width="0.8"/><line x1="885.48" y1="72.3" x2="885.48" y2="74.5" stroke="#dadada" stroke-width="0.8"/><line x1="891.10" y1="70.5" x2="891.10" y2="74.5" stroke="#dadada" stroke-width="0.8"/><line x1="896.73" y1="72.3" x2="896.73" y2="74.5" stroke="#dadada" stroke-width="0.8"/><line x1="902.35" y1="70.5" x2="902.35" y2="74.5" stroke="#dadada" stroke-width="0.8"/><line x1="907.98" y1="72.3" x2="907.98" y2="74.5" stroke="#dadada" stroke-width="0.8"/><line x1="913.60" y1="60" x2="913.60" y2="74.5" stroke="#d8d8d8" stroke-width="1"/><text x="915.40" y="68.8" font-size="8.2" fill="#7a7a7a" font-family="Liberation Sans">19</text><line x1="919.23" y1="72.3" x2="919.23" y2="74.5" stroke="#dadada" stroke-width="0.8"/><line x1="924.85" y1="70.5" x2="924.85" y2="74.5" stroke="#dadada" stroke-width="0.8"/><line x1="930.48" y1="72.3" x2="930.48" y2="74.5" stroke="#dadada" stroke-width="0.8"/><line x1="936.10" y1="70.5" x2="936.10" y2="74.5" stroke="#dadada" stroke-width="0.8"/><line x1="941.73" y1="72.3" x2="941.73" y2="74.5" stroke="#dadada" stroke-width="0.8"/><line x1="947.35" y1="70.5" x2="947.35" y2="74.5" stroke="#dadada" stroke-width="0.8"/><line x1="952.98" y1="72.3" x2="952.98" y2="74.5" stroke="#dadada" stroke-width="0.8"/><line x1="958.60" y1="60" x2="958.60" y2="74.5" stroke="#d8d8d8" stroke-width="1"/><text x="960.40" y="68.8" font-size="8.2" fill="#7a7a7a" font-family="Liberation Sans">20</text><line x1="964.23" y1="72.3" x2="964.23" y2="74.5" stroke="#dadada" stroke-width="0.8"/><line x1="969.85" y1="70.5" x2="969.85" y2="74.5" stroke="#dadada" stroke-width="0.8"/><line x1="975.48" y1="72.3" x2="975.48" y2="74.5" stroke="#dadada" stroke-width="0.8"/><line x1="981.10" y1="70.5" x2="981.10" y2="74.5" stroke="#dadada" stroke-width="0.8"/><line x1="986.73" y1="72.3" x2="986.73" y2="74.5" stroke="#dadada" stroke-width="0.8"/><line x1="992.35" y1="70.5" x2="992.35" y2="74.5" stroke="#dadada" stroke-width="0.8"/><line x1="997.98" y1="72.3" x2="997.98" y2="74.5" stroke="#dadada" stroke-width="0.8"/><line x1="43" y1="74.30" x2="58.5" y2="74.30" stroke="#d8d8d8" stroke-width="1"/><text transform="translate(45.2 76.30) rotate(90)" font-size="8.2" fill="#777" font-family="Liberation Sans">0</text><line x1="56" y1="79.92" x2="58.5" y2="79.92" stroke="#dadada" stroke-width="0.8"/><line x1="54.5" y1="85.55" x2="58.5" y2="85.55" stroke="#dadada" stroke-width="0.8"/><line x1="56" y1="91.17" x2="58.5" y2="91.17" stroke="#dadada" stroke-width="0.8"/><line x1="54.5" y1="96.80" x2="58.5" y2="96.80" stroke="#dadada" stroke-width="0.8"/><line x1="56" y1="102.42" x2="58.5" y2="102.42" stroke="#dadada" stroke-width="0.8"/><line x1="54.5" y1="108.05" x2="58.5" y2="108.05" stroke="#dadada" stroke-width="0.8"/><line x1="56" y1="113.67" x2="58.5" y2="113.67" stroke="#dadada" stroke-width="0.8"/><line x1="43" y1="119.30" x2="58.5" y2="119.30" stroke="#d8d8d8" stroke-width="1"/><text transform="translate(45.2 121.30) rotate(90)" font-size="8.2" fill="#777" font-family="Liberation Sans">1</text><line x1="56" y1="124.92" x2="58.5" y2="124.92" stroke="#dadada" stroke-width="0.8"/><line x1="54.5" y1="130.55" x2="58.5" y2="130.55" stroke="#dadada" stroke-width="0.8"/><line x1="56" y1="136.18" x2="58.5" y2="136.18" stroke="#dadada" stroke-width="0.8"/><line x1="54.5" y1="141.80" x2="58.5" y2="141.80" stroke="#dadada" stroke-width="0.8"/><line x1="56" y1="147.43" x2="58.5" y2="147.43" stroke="#dadada" stroke-width="0.8"/><line x1="54.5" y1="153.05" x2="58.5" y2="153.05" stroke="#dadada" stroke-width="0.8"/><line x1="56" y1="158.68" x2="58.5" y2="158.68" stroke="#dadada" stroke-width="0.8"/><line x1="43" y1="164.30" x2="58.5" y2="164.30" stroke="#d8d8d8" stroke-width="1"/><text transform="translate(45.2 166.30) rotate(90)" font-size="8.2" fill="#777" font-family="Liberation Sans">2</text><line x1="56" y1="169.93" x2="58.5" y2="169.93" stroke="#dadada" stroke-width="0.8"/><line x1="54.5" y1="175.55" x2="58.5" y2="175.55" stroke="#dadada" stroke-width="0.8"/><line x1="56" y1="181.18" x2="58.5" y2="181.18" stroke="#dadada" stroke-width="0.8"/><line x1="54.5" y1="186.80" x2="58.5" y2="186.80" stroke="#dadada" stroke-width="0.8"/><line x1="56" y1="192.43" x2="58.5" y2="192.43" stroke="#dadada" stroke-width="0.8"/><line x1="54.5" y1="198.05" x2="58.5" y2="198.05" stroke="#dadada" stroke-width="0.8"/><line x1="56" y1="203.68" x2="58.5" y2="203.68" stroke="#dadada" stroke-width="0.8"/><line x1="43" y1="209.30" x2="58.5" y2="209.30" stroke="#d8d8d8" stroke-width="1"/><text transform="translate(45.2 211.30) rotate(90)" font-size="8.2" fill="#777" font-family="Liberation Sans">3</text><line x1="56" y1="214.93" x2="58.5" y2="214.93" stroke="#dadada" stroke-width="0.8"/><line x1="54.5" y1="220.55" x2="58.5" y2="220.55" stroke="#dadada" stroke-width="0.8"/><line x1="56" y1="226.18" x2="58.5" y2="226.18" stroke="#dadada" stroke-width="0.8"/><line x1="54.5" y1="231.80" x2="58.5" y2="231.80" stroke="#dadada" stroke-width="0.8"/><line x1="56" y1="237.43" x2="58.5" y2="237.43" stroke="#dadada" stroke-width="0.8"/><line x1="54.5" y1="243.05" x2="58.5" y2="243.05" stroke="#dadada" stroke-width="0.8"/><line x1="56" y1="248.68" x2="58.5" y2="248.68" stroke="#dadada" stroke-width="0.8"/><line x1="43" y1="254.30" x2="58.5" y2="254.30" stroke="#d8d8d8" stroke-width="1"/><text transform="translate(45.2 256.30) rotate(90)" font-size="8.2" fill="#777" font-family="Liberation Sans">4</text><line x1="56" y1="259.93" x2="58.5" y2="259.93" stroke="#dadada" stroke-width="0.8"/><line x1="54.5" y1="265.55" x2="58.5" y2="265.55" stroke="#dadada" stroke-width="0.8"/><line x1="56" y1="271.18" x2="58.5" y2="271.18" stroke="#dadada" stroke-width="0.8"/><line x1="54.5" y1="276.80" x2="58.5" y2="276.80" stroke="#dadada" stroke-width="0.8"/><line x1="56" y1="282.43" x2="58.5" y2="282.43" stroke="#dadada" stroke-width="0.8"/><line x1="54.5" y1="288.05" x2="58.5" y2="288.05" stroke="#dadada" stroke-width="0.8"/><line x1="56" y1="293.68" x2="58.5" y2="293.68" stroke="#dadada" stroke-width="0.8"/><line x1="43" y1="299.30" x2="58.5" y2="299.30" stroke="#d8d8d8" stroke-width="1"/><text transform="translate(45.2 301.30) rotate(90)" font-size="8.2" fill="#777" font-family="Liberation Sans">5</text><line x1="56" y1="304.93" x2="58.5" y2="304.93" stroke="#dadada" stroke-width="0.8"/><line x1="54.5" y1="310.55" x2="58.5" y2="310.55" stroke="#dadada" stroke-width="0.8"/><line x1="56" y1="316.18" x2="58.5" y2="316.18" stroke="#dadada" stroke-width="0.8"/><line x1="54.5" y1="321.80" x2="58.5" y2="321.80" stroke="#dadada" stroke-width="0.8"/><line x1="56" y1="327.43" x2="58.5" y2="327.43" stroke="#dadada" stroke-width="0.8"/><line x1="54.5" y1="333.05" x2="58.5" y2="333.05" stroke="#dadada" stroke-width="0.8"/><line x1="56" y1="338.68" x2="58.5" y2="338.68" stroke="#dadada" stroke-width="0.8"/><line x1="43" y1="344.30" x2="58.5" y2="344.30" stroke="#d8d8d8" stroke-width="1"/><text transform="translate(45.2 346.30) rotate(90)" font-size="8.2" fill="#777" font-family="Liberation Sans">6</text><line x1="56" y1="349.93" x2="58.5" y2="349.93" stroke="#dadada" stroke-width="0.8"/><line x1="54.5" y1="355.55" x2="58.5" y2="355.55" stroke="#dadada" stroke-width="0.8"/><line x1="56" y1="361.18" x2="58.5" y2="361.18" stroke="#dadada" stroke-width="0.8"/><line x1="54.5" y1="366.80" x2="58.5" y2="366.80" stroke="#dadada" stroke-width="0.8"/><line x1="56" y1="372.43" x2="58.5" y2="372.43" stroke="#dadada" stroke-width="0.8"/><line x1="54.5" y1="378.05" x2="58.5" y2="378.05" stroke="#dadada" stroke-width="0.8"/><line x1="56" y1="383.68" x2="58.5" y2="383.68" stroke="#dadada" stroke-width="0.8"/><line x1="43" y1="389.30" x2="58.5" y2="389.30" stroke="#d8d8d8" stroke-width="1"/><text transform="translate(45.2 391.30) rotate(90)" font-size="8.2" fill="#777" font-family="Liberation Sans">7</text><line x1="56" y1="394.93" x2="58.5" y2="394.93" stroke="#dadada" stroke-width="0.8"/><line x1="54.5" y1="400.55" x2="58.5" y2="400.55" stroke="#dadada" stroke-width="0.8"/><line x1="56" y1="406.18" x2="58.5" y2="406.18" stroke="#dadada" stroke-width="0.8"/><line x1="54.5" y1="411.80" x2="58.5" y2="411.80" stroke="#dadada" stroke-width="0.8"/><line x1="56" y1="417.43" x2="58.5" y2="417.43" stroke="#dadada" stroke-width="0.8"/><line x1="54.5" y1="423.05" x2="58.5" y2="423.05" stroke="#dadada" stroke-width="0.8"/><line x1="56" y1="428.68" x2="58.5" y2="428.68" stroke="#dadada" stroke-width="0.8"/><line x1="43" y1="434.30" x2="58.5" y2="434.30" stroke="#d8d8d8" stroke-width="1"/><text transform="translate(45.2 436.30) rotate(90)" font-size="8.2" fill="#777" font-family="Liberation Sans">8</text><line x1="56" y1="439.93" x2="58.5" y2="439.93" stroke="#dadada" stroke-width="0.8"/><line x1="54.5" y1="445.55" x2="58.5" y2="445.55" stroke="#dadada" stroke-width="0.8"/><line x1="56" y1="451.18" x2="58.5" y2="451.18" stroke="#dadada" stroke-width="0.8"/><line x1="54.5" y1="456.80" x2="58.5" y2="456.80" stroke="#dadada" stroke-width="0.8"/><line x1="56" y1="462.43" x2="58.5" y2="462.43" stroke="#dadada" stroke-width="0.8"/><line x1="54.5" y1="468.05" x2="58.5" y2="468.05" stroke="#dadada" stroke-width="0.8"/><line x1="56" y1="473.68" x2="58.5" y2="473.68" stroke="#dadada" stroke-width="0.8"/><line x1="43" y1="479.30" x2="58.5" y2="479.30" stroke="#d8d8d8" stroke-width="1"/><text transform="translate(45.2 481.30) rotate(90)" font-size="8.2" fill="#777" font-family="Liberation Sans">9</text><line x1="56" y1="484.93" x2="58.5" y2="484.93" stroke="#dadada" stroke-width="0.8"/><line x1="54.5" y1="490.55" x2="58.5" y2="490.55" stroke="#dadada" stroke-width="0.8"/><line x1="56" y1="496.18" x2="58.5" y2="496.18" stroke="#dadada" stroke-width="0.8"/><line x1="54.5" y1="501.80" x2="58.5" y2="501.80" stroke="#dadada" stroke-width="0.8"/><line x1="56" y1="507.43" x2="58.5" y2="507.43" stroke="#dadada" stroke-width="0.8"/><line x1="54.5" y1="513.05" x2="58.5" y2="513.05" stroke="#dadada" stroke-width="0.8"/><line x1="56" y1="518.67" x2="58.5" y2="518.67" stroke="#dadada" stroke-width="0.8"/><line x1="43" y1="524.30" x2="58.5" y2="524.30" stroke="#d8d8d8" stroke-width="1"/><text transform="translate(45.2 526.30) rotate(90)" font-size="8.2" fill="#777" font-family="Liberation Sans">10</text><line x1="56" y1="529.92" x2="58.5" y2="529.92" stroke="#dadada" stroke-width="0.8"/><line x1="54.5" y1="535.55" x2="58.5" y2="535.55" stroke="#dadada" stroke-width="0.8"/><line x1="56" y1="541.17" x2="58.5" y2="541.17" stroke="#dadada" stroke-width="0.8"/><line x1="54.5" y1="546.80" x2="58.5" y2="546.80" stroke="#dadada" stroke-width="0.8"/><line x1="56" y1="552.42" x2="58.5" y2="552.42" stroke="#dadada" stroke-width="0.8"/><line x1="54.5" y1="558.05" x2="58.5" y2="558.05" stroke="#dadada" stroke-width="0.8"/><line x1="56" y1="563.67" x2="58.5" y2="563.67" stroke="#dadada" stroke-width="0.8"/><line x1="43" y1="569.30" x2="58.5" y2="569.30" stroke="#d8d8d8" stroke-width="1"/><text transform="translate(45.2 571.30) rotate(90)" font-size="8.2" fill="#777" font-family="Liberation Sans">11</text><line x1="56" y1="574.92" x2="58.5" y2="574.92" stroke="#dadada" stroke-width="0.8"/><line x1="54.5" y1="580.55" x2="58.5" y2="580.55" stroke="#dadada" stroke-width="0.8"/><line x1="56" y1="586.17" x2="58.5" y2="586.17" stroke="#dadada" stroke-width="0.8"/><line x1="54.5" y1="591.80" x2="58.5" y2="591.80" stroke="#dadada" stroke-width="0.8"/><line x1="56" y1="597.42" x2="58.5" y2="597.42" stroke="#dadada" stroke-width="0.8"/><line x1="54.5" y1="603.05" x2="58.5" y2="603.05" stroke="#dadada" stroke-width="0.8"/><line x1="56" y1="608.67" x2="58.5" y2="608.67" stroke="#dadada" stroke-width="0.8"/><line x1="43" y1="614.30" x2="58.5" y2="614.30" stroke="#d8d8d8" stroke-width="1"/><text transform="translate(45.2 616.30) rotate(90)" font-size="8.2" fill="#777" font-family="Liberation Sans">12</text><line x1="56" y1="619.92" x2="58.5" y2="619.92" stroke="#dadada" stroke-width="0.8"/><line x1="54.5" y1="625.55" x2="58.5" y2="625.55" stroke="#dadada" stroke-width="0.8"/><line x1="56" y1="631.17" x2="58.5" y2="631.17" stroke="#dadada" stroke-width="0.8"/></svg><div class="abs" style="left:0;top:0;width:1200px;height:26.5px;background:#42454c"></div><div class="abs" style="left:0;top:26.5px;width:1200px;height:1.5px;background:#26282c"></div><div class="abs" style="left:14.2px;top:8.799999999999999px;width:15.4px;height:1.7px;background:#fff"></div><div class="abs" style="left:14.2px;top:12.5px;width:15.4px;height:1.7px;background:#fff"></div><div class="abs" style="left:14.2px;top:16.3px;width:15.4px;height:1.7px;background:#fff"></div><div class="t" style="left:43.75px;top:8.95px;font-size:10.10px;color:#fff;font-weight:normal;-webkit-text-stroke:0.2px #fff">Canvas</div><div class="t" style="left:476.70px;top:8.32px;font-size:10.85px;color:#fff;font-weight:normal;-webkit-text-stroke:0.2px #fff">Untitled*</div><svg class="abs" style="left:899px;top:7px" width="15" height="15" viewBox="0 0 15 15"><path d="M3 11 L3.5 10 Q4 9 4 7 Q4 3 7.5 3 Q11 3 11 7 Q11 9 11.5 10 L12 11 Z" fill="none" stroke="#fff" stroke-width="1.3" stroke-linejoin="round"/><path d="M6 12.5 Q7.5 14 9 12.5" fill="none" stroke="#fff" stroke-width="1.2"/><rect x="7" y="1.6" width="1" height="1.6" fill="#fff"/></svg><div class="t" style="left:929.80px;top:9.70px;font-size:10.28px;color:#fff;font-weight:normal;-webkit-text-stroke:0.2px #fff">My Projects</div><div class="t" style="left:996.00px;top:9.88px;font-size:10.30px;color:#fff;font-weight:normal;-webkit-text-stroke:0.2px #fff">Save</div><div class="abs" style="left:1032px;top:9px;width:1.2px;height:8.5px;background:#fff"></div><div class="t" style="left:1052.50px;top:9.94px;font-size:10.00px;color:#fff;font-weight:normal;-webkit-text-stroke:0.2px #fff">Maker</div><svg class="abs" style="left:1086px;top:10px" width="11" height="8" viewBox="0 0 11 8"><path d="M1 1.5 L5.5 6 L10 1.5" fill="none" stroke="#fff" stroke-width="1.4"/></svg><div class="abs" style="left:1111px;top:4.6px;width:83px;height:17px;border-radius:9px;background:#13a674"></div><div class="t" style="left:1138.94px;top:9.13px;font-size:8.00px;color:#fff;font-weight:bold;">Make It</div><div class="abs" style="left:0;top:28px;width:43.5px;height:616px;background:#dcdcdc"></div><div class="t" style="left:15.78px;top:55.74px;font-size:6.45px;color:#5a5a5a;font-weight:normal;">New</div><div class="t" style="left:7.19px;top:99.14px;font-size:6.45px;color:#5a5a5a;font-weight:normal;">Templates</div><div class="t" style="left:9.91px;top:142.64px;font-size:6.45px;color:#5a5a5a;font-weight:normal;">Projects</div><div class="t" style="left:10.97px;top:186.54px;font-size:6.45px;color:#5a5a5a;font-weight:normal;">Shapes</div><div class="t" style="left:11.12px;top:230.34px;font-size:6.45px;color:#5a5a5a;font-weight:normal;">Images</div><div class="t" style="left:16.48px;top:273.84px;font-size:6.45px;color:#5a5a5a;font-weight:normal;">Text</div><div class="t" style="left:10.06px;top:317.64px;font-size:6.45px;color:#5a5a5a;font-weight:normal;">Phrases</div><div class="t" style="left:10.04px;top:359.64px;font-size:6.45px;color:#5a5a5a;font-weight:normal;">Editable</div><div class="t" style="left:11.12px;top:368.04px;font-size:6.45px;color:#5a5a5a;font-weight:normal;">Images</div><div class="t" style="left:11.23px;top:405.34px;font-size:6.45px;color:#5a5a5a;font-weight:normal;">Upload</div><div class="t" style="left:6.48px;top:449.14px;font-size:6.45px;color:#5a5a5a;font-weight:normal;">Monogram</div><svg class="abs" style="left:0;top:0" width="44" height="644"><circle cx="22" cy="43" r="6" fill="none" stroke="#3f3f3f" stroke-width="1.3"/><path d="M22 39.5V46.5M18.5 43H25.5" stroke="#3f3f3f" stroke-width="1.3"/><path d="M18.5 82 L20.5 80.5 Q22 82 23.5 80.5 L25.5 82 L27 84.5 L25.5 85.5 V92 H18.5 V85.5 L17 84.5 Z" fill="none" stroke="#3f3f3f" stroke-width="1.2" stroke-linejoin="round"/><rect x="17.8" y="125" width="8.5" height="11.5" rx="1.2" fill="none" stroke="#3f3f3f" stroke-width="1.2"/><circle cx="22" cy="129.5" r="1.6" fill="none" stroke="#3f3f3f" stroke-width="1"/><path d="M19.8 133.5H24.2" stroke="#3f3f3f" stroke-width="1"/><path d="M19 125 L21 123.3 H25" fill="none" stroke="#3f3f3f" stroke-width="1"/><path d="M20.5 168 L15.8 176 H25.2 Z" fill="none" stroke="#3f3f3f" stroke-width="1.2" stroke-linejoin="round"/><circle cx="24.3" cy="177" r="3.6" fill="#dcdcdc" stroke="#3f3f3f" stroke-width="1.2"/><path d="M22 211.5 Q26.5 211.5 26.5 216.5 Q26.5 220 22 222.5 Q17.5 220 17.5 216.5 Q17.5 211.5 22 211.5Z" fill="none" stroke="#3f3f3f" stroke-width="1.2"/><path d="M20.5 213 V220.5 M23.5 213 V220.5" stroke="#3f3f3f" stroke-width="0.9"/><rect x="20.2" y="222.5" width="3.6" height="2.2" fill="#3f3f3f"/><path d="M17.2 257.5 V256.3 H26.8 V257.5 M22 256.3 V267.5 M20 267.5 H24" fill="none" stroke="#3f3f3f" stroke-width="1.4"/><ellipse cx="22" cy="305.8" rx="6" ry="5.2" fill="none" stroke="#3f3f3f" stroke-width="1.2"/><path d="M19 304.6 H25 M19 307 H25" stroke="#3f3f3f" stroke-width="1"/><path d="M26.5 309 L28 311.5 L25 310.5" fill="#3f3f3f"/><path d="M18.5 341.5 L21.5 339 L20.5 343.5 Z" fill="#3f3f3f"/><path d="M19 344 V350.5 H26 V341.5 H22.5" fill="none" stroke="#3f3f3f" stroke-width="1.2"/><circle cx="19" cy="350.5" r="1.3" fill="#3f3f3f"/><circle cx="26" cy="350.5" r="1.3" fill="#3f3f3f"/><circle cx="26" cy="341.5" r="1.3" fill="#3f3f3f"/><path d="M17.5 387.5 H26.5 M22 398.5 V390.5 M18.8 393.5 L22 390.3 L25.2 393.5" fill="none" stroke="#3f3f3f" stroke-width="1.3"/><path d="M15.5 432.5 H28.5 M16 434.5 V442 M18.5 434.5 V442 M21 434.5 V440 M16 434.5 Q18.5 433.5 21 434.5" fill="none" stroke="#3f3f3f" stroke-width="1.1"/><path d="M27.5 435 Q23 434 23.2 438.5 Q23.5 443 27.5 442 V438.5 H25" fill="none" stroke="#3f3f3f" stroke-width="1.2"/></svg><div class="abs" style="left:43.5px;top:28px;width:968.5px;height:31px;background:#fff"></div><svg class="abs" style="left:52px;top:40px" width="40" height="14" viewBox="0 0 40 14"><path d="M3.5 3.5 H9.5 Q13 3.5 13 7 Q13 10.5 9.5 10.5 H5" fill="none" stroke="#3a3a3a" stroke-width="1.3"/><path d="M1.5 3.5 L4.8 1 V6 Z" fill="#3a3a3a"/><path d="M36 3.5 H30 Q26.5 3.5 26.5 7 Q26.5 10.5 30 10.5 H34.5" fill="none" stroke="#c8c8c8" stroke-width="1.2"/><path d="M37.5 3.5 L34.5 1.2 V5.8 Z" fill="#c8c8c8"/></svg><div class="abs" style="left:100.7px;top:33px;width:1px;height:22px;background:#e6e6e6"></div><div class="abs" style="left:187.3px;top:33px;width:1px;height:22px;background:#e6e6e6"></div><div class="abs" style="left:259.7px;top:33px;width:1px;height:22px;background:#e6e6e6"></div><div class="abs" style="left:354.3px;top:33px;width:1px;height:22px;background:#e6e6e6"></div><div class="abs" style="left:391px;top:33px;width:1px;height:22px;background:#e6e6e6"></div><div class="abs" style="left:507px;top:33px;width:1px;height:22px;background:#e6e6e6"></div><div class="abs" style="left:577px;top:33px;width:1px;height:22px;background:#e6e6e6"></div><div class="t" style="left:110.90px;top:34.11px;font-size:6.60px;color:#6b6b6b;font-weight:normal;">Operation</div><div class="abs" style="left:110.7px;top:43.3px;width:52.6px;height:10.7px;border:1px solid #e2e2e2;border-radius:2px;background:#fff"></div><div class="t" style="left:114.30px;top:45.75px;font-size:6.79px;color:#555;font-weight:normal;">Multiple</div><svg class="abs" style="left:155px;top:46.5px" width="6" height="5"><path d="M0.5 1 H5 L2.75 4 Z" fill="#222"/></svg><div class="abs" style="left:167.3px;top:43.5px;width:11px;height:10.5px;border:1px solid #e6e6e6;border-radius:2px"></div><svg class="abs" style="left:167px;top:43px" width="12" height="12"><path d="M1.8 10.3 L9.8 1.8" stroke="#b81a12" stroke-width="2"/></svg><div class="t" style="left:196.70px;top:34.11px;font-size:6.60px;color:#6b6b6b;font-weight:normal;">Select All</div><svg class="abs" style="left:203px;top:42px" width="15" height="15" viewBox="0 0 15 15"><rect x="2.4" y="2.4" width="10.2" height="10.2" rx="2.5" fill="none" stroke="#333" stroke-width="1.25" stroke-dasharray="1.5 2.1"/><circle cx="5.9" cy="5.7" r="0.95" fill="#333"/><circle cx="9.6" cy="5.7" r="0.95" fill="#333"/><circle cx="5.9" cy="9.2" r="0.95" fill="#333"/><path d="M9 8.6 L11.6 9.6 L9.6 11.4 Z" fill="#222"/></svg><div class="t" style="left:236.00px;top:34.11px;font-size:6.60px;color:#6b6b6b;font-weight:normal;">Edit</div><svg class="abs" style="left:233px;top:42px" width="20" height="14" viewBox="0 0 20 14"><path d="M2 12 L2.5 9.5 L9.5 2.5 L11.5 4.5 L4.5 11.5 Z" fill="none" stroke="#3a3a3a" stroke-width="1.1" stroke-linejoin="round"/><path d="M14.5 6 H18 L16.25 8.5 Z" fill="#222"/></svg><div class="t" style="left:270.70px;top:34.11px;font-size:6.60px;color:#c8c8c8;font-weight:normal;">Align</div><svg class="abs" style="left:268px;top:43px" width="20" height="12" viewBox="0 0 20 12"><path d="M1.5 1 V11" stroke="#cfcfcf" stroke-width="1"/><rect x="3.5" y="3.5" width="6.5" height="4.5" rx="1" fill="none" stroke="#cfcfcf" stroke-width="1"/><path d="M13.5 5 H17 L15.25 7 Z" fill="#cfcfcf"/></svg><div class="t" style="left:295.70px;top:34.11px;font-size:6.60px;color:#6b6b6b;font-weight:normal;">Arrange</div><svg class="abs" style="left:298.5px;top:43.5px" width="22" height="14" viewBox="0 0 22 14"><rect x="1.5" y="1.3" width="5.5" height="5.2" rx="1.4" fill="none" stroke="#3a3a3a" stroke-width="1"/><rect x="3.8" y="3.6" width="5.5" height="5.2" rx="1.4" fill="#fff" stroke="#3a3a3a" stroke-width="1"/><rect x="6.2" y="6" width="4.8" height="4.6" rx="1.4" fill="#fff" stroke="#3a3a3a" stroke-width="1"/><path d="M13.8 5.6 H17 L15.4 7.9 Z" fill="#222"/></svg><div class="t" style="left:331.70px;top:34.11px;font-size:6.60px;color:#6b6b6b;font-weight:normal;">Flip</div><svg class="abs" style="left:328px;top:43px" width="20" height="14" viewBox="0 0 20 14"><path d="M5.7 1.5 L1.5 11.2 H5.7 Z M7.9 1.5 L12.1 11.2 H7.9 Z" fill="none" stroke="#3a3a3a" stroke-width="1.05" stroke-linejoin="round"/><path d="M13.8 5.3 H17 L15.4 7.6 Z" fill="#222"/></svg><div class="t" style="left:364.00px;top:34.11px;font-size:6.60px;color:#6b6b6b;font-weight:normal;">Offset</div><svg class="abs" style="left:364px;top:42px" width="22" height="14" viewBox="0 0 22 14"><path d="M7 1.5 L12.5 5 L10.7 11.5 H3.3 L1.5 5 Z" fill="none" stroke="#3a3a3a" stroke-width="1" stroke-dasharray="1.3 1"/><path d="M7 4 L10 6 L9 9.5 H5 L4 6 Z" fill="none" stroke="#3a3a3a" stroke-width="1"/><path d="M15 6 H18.5 L16.75 8.5 Z" fill="#222"/></svg><div class="t" style="left:400.30px;top:34.11px;font-size:6.60px;color:#6b6b6b;font-weight:normal;">Size</div><div class="abs" style="left:409.3px;top:43.1px;width:35.19999999999999px;height:11.3px;border:1px solid #e6e6e6;border-radius:2px;background:#fff"></div><div class="t" style="left:414.00px;top:45.47px;font-size:7.60px;color:#666;font-weight:normal;">3.937</div><svg class="abs" style="left:438.0px;top:45.2px" width="6" height="8"><path d="M0.6 3.1 L2.6 0.4 L4.6 3.1 Z M0.6 4.5 L2.6 7.2 L4.6 4.5 Z" fill="#1a1a1a"/></svg><div class="t" style="left:401.00px;top:45.27px;font-size:7.60px;color:#666;font-weight:normal;">W</div><div class="abs" style="left:461.3px;top:43.1px;width:35.89999999999998px;height:11.3px;border:1px solid #e6e6e6;border-radius:2px;background:#fff"></div><div class="t" style="left:466.00px;top:45.47px;font-size:7.60px;color:#666;font-weight:normal;">4.331</div><svg class="abs" style="left:490.7px;top:45.2px" width="6" height="8"><path d="M0.6 3.1 L2.6 0.4 L4.6 3.1 Z M0.6 4.5 L2.6 7.2 L4.6 4.5 Z" fill="#1a1a1a"/></svg><div class="t" style="left:454.30px;top:45.27px;font-size:7.60px;color:#666;font-weight:normal;">H</div><svg class="abs" style="left:440px;top:33px" width="30" height="14" viewBox="0 0 30 14"><path d="M13 5.6 V4.2 Q13 2.3 15 2.3 Q17 2.3 17 4.2 V5.6" fill="none" stroke="#6a6a6a" stroke-width="0.9"/><rect x="12.2" y="5.6" width="5.6" height="4.6" rx="0.8" fill="none" stroke="#6a6a6a" stroke-width="0.9"/><circle cx="15" cy="7.9" r="0.6" fill="#6a6a6a"/><path d="M7 12.5 V11 Q7 10 8.5 10 H10.5 M19.5 10 H21.5 Q23 10 23 11 V12.5" fill="none" stroke="#dcdcdc" stroke-width="0.7"/></svg><div class="t" style="left:517.00px;top:34.11px;font-size:6.60px;color:#6b6b6b;font-weight:normal;">Rotate</div><svg class="abs" style="left:516px;top:43px" width="13" height="13" viewBox="0 0 13 13"><path d="M2 5.5 Q3 2 6.5 2 Q9 2 10.5 4" fill="none" stroke="#3a3a3a" stroke-width="1.2"/><path d="M11 7.5 Q10 11 6.5 11 Q4 11 2.5 9" fill="none" stroke="#3a3a3a" stroke-width="1.2"/><path d="M11.5 1.5 V5.5 H7.5 Z M1.5 11.5 V7.5 H5.5 Z" fill="#3a3a3a"/></svg><div class="abs" style="left:531.3px;top:43.1px;width:35.90000000000009px;height:11.3px;border:1px solid #e6e6e6;border-radius:2px;background:#fff"></div><div class="t" style="left:536.00px;top:45.47px;font-size:7.60px;color:#666;font-weight:normal;">0</div><svg class="abs" style="left:560.7px;top:45.2px" width="6" height="8"><path d="M0.6 3.1 L2.6 0.4 L4.6 3.1 Z M0.6 4.5 L2.6 7.2 L4.6 4.5 Z" fill="#1a1a1a"/></svg><div class="t" style="left:586.60px;top:34.11px;font-size:6.60px;color:#6b6b6b;font-weight:normal;">Position</div><div class="abs" style="left:592.7px;top:43.1px;width:35.799999999999955px;height:11.3px;border:1px solid #e6e6e6;border-radius:2px;background:#fff"></div><div class="t" style="left:597.40px;top:45.47px;font-size:7.60px;color:#666;font-weight:normal;">7.417</div><svg class="abs" style="left:622.0px;top:45.2px" width="6" height="8"><path d="M0.6 3.1 L2.6 0.4 L4.6 3.1 Z M0.6 4.5 L2.6 7.2 L4.6 4.5 Z" fill="#1a1a1a"/></svg><div class="t" style="left:587.00px;top:45.27px;font-size:7.60px;color:#666;font-weight:normal;">X</div><div class="abs" style="left:641.3px;top:43.1px;width:35.90000000000009px;height:11.3px;border:1px solid #e6e6e6;border-radius:2px;background:#fff"></div><div class="t" style="left:646.00px;top:45.47px;font-size:7.60px;color:#666;font-weight:normal;">0.515</div><svg class="abs" style="left:670.7px;top:45.2px" width="6" height="8"><path d="M0.6 3.1 L2.6 0.4 L4.6 3.1 Z M0.6 4.5 L2.6 7.2 L4.6 4.5 Z" fill="#1a1a1a"/></svg><div class="t" style="left:636.30px;top:45.27px;font-size:7.60px;color:#666;font-weight:normal;">Y</div><div class="abs" style="left:1012px;top:28px;width:188px;height:616px;background:#fff"></div><div class="abs" style="left:1011px;top:28px;width:1px;height:585px;background:#e8e8e8"></div><div class="t" style="left:1022.90px;top:39.67px;font-size:8.19px;color:#1f8466;font-weight:bold;">Layers</div><div class="t" style="left:1070.00px;top:38.93px;font-size:9.06px;color:#6f6f6f;font-weight:normal;">Color Sync</div><div class="abs" style="left:1012px;top:58.5px;width:188px;height:1px;background:#ececec"></div><div class="abs" style="left:1013px;top:56.5px;width:47px;height:2px;background:#1b7a5e"></div><svg class="abs" style="left:1020px;top:64px" width="72" height="20" viewBox="0 0 72 20"><g fill="none" stroke="#d2d2d2" stroke-width="1.1"><path d="M4.5 6.5 V4.5 H6.5 M13.5 4.5 H15.5 V6.5 M15.5 13.5 V15.5 H13.5 M6.5 15.5 H4.5 V13.5"/><circle cx="8.8" cy="8.8" r="2.6"/><circle cx="11.2" cy="11.2" r="2.6"/></g><g fill="none" stroke="#444" stroke-width="1.2"><path d="M29 13.5 H29 V4.5 H37.5 V6.5"/><rect x="31.5" y="7" width="9" height="8.5" rx="1"/><path d="M36 9 V13.5 M33.8 11.2 H38.2"/></g><g fill="none" stroke="#444" stroke-width="1.2"><path d="M55 6.5 H66 M58 6.5 V5 H63 V6.5"/><path d="M56.5 6.5 L57.3 15.5 H63.7 L64.5 6.5"/><path d="M59.2 9 V13.2 M61.8 9 V13.2"/></g></svg><div class="abs" style="left:1012px;top:89px;width:188px;height:1px;background:#ececec"></div><div class="abs" style="left:1012px;top:90px;width:178px;height:461px;background:#fff"></div><div class="abs" style="left:1012px;top:90px;width:177.5px;height:388px;background:#f9f9f9"></div><div class="abs" style="left:1190px;top:90px;width:10px;height:461px;background:#efefef"></div><svg class="abs" style="left:1190px;top:90px" width="10" height="461"><path d="M2 8 L5 4.5 L8 8 Z" fill="#888"/><path d="M2 453 L5 456.5 L8 453 Z" fill="#888"/></svg><div class="abs" style="left:1014.5px;top:91.5px;width:172.5px;height:139.5px;background:#e4f6f0;border-radius:2px"></div><svg class="abs" style="left:1020px;top:102px" width="32" height="12" viewBox="0 0 32 12"><path d="M2.5 4.5 L5 7 L7.5 4.5" fill="none" stroke="#444" stroke-width="1.2"/><path d="M22 3 H20 Q17 3 17 6 Q17 9 20 9 H26 Q28.5 9 28.5 6.5 Q28.5 4.5 26.5 4.5 H20.5 Q19.5 4.5 19.5 6 Q19.5 7.3 20.5 7.3 H25" fill="none" stroke="#444" stroke-width="1.2"/><path d="M24 3 H26" stroke="#444" stroke-width="1.2"/></svg><div class="t" style="left:1055.00px;top:104.06px;font-size:10.09px;color:#555;font-weight:normal;">Attach</div><div class="t" style="left:1075.00px;top:139.37px;font-size:9.36px;color:#555;font-weight:normal;">Sarah</div><div class="t" style="left:1072.00px;top:173.88px;font-size:9.94px;color:#555;font-weight:normal;">Svg-table-trees-craftw...</div><div class="t" style="left:1072.00px;top:208.88px;font-size:9.94px;color:#555;font-weight:normal;">Svg-table-trees-craftw...</div><div class="abs" style="left:1012px;top:231px;width:178px;height:1px;background:#ffffff"></div><svg class="abs" style="left:1020px;top:242.6px" width="32" height="12" viewBox="0 0 32 12"><path d="M2.5 4.5 L5 7 L7.5 4.5" fill="none" stroke="#444" stroke-width="1.2"/><path d="M22 3 H20 Q17 3 17 6 Q17 9 20 9 H26 Q28.5 9 28.5 6.5 Q28.5 4.5 26.5 4.5 H20.5 Q19.5 4.5 19.5 6 Q19.5 7.3 20.5 7.3 H25" fill="none" stroke="#444" stroke-width="1.2"/><path d="M24 3 H26" stroke="#444" stroke-width="1.2"/></svg><div class="t" style="left:1055.00px;top:244.66px;font-size:10.09px;color:#555;font-weight:normal;">Attach</div><div class="t" style="left:1075.00px;top:280.24px;font-size:9.88px;color:#555;font-weight:normal;">Svg-table-trees-craft...</div><div class="abs" style="left:1055.5px;top:312.4px;width:13.6px;height:14.8px;background:#8ac8f3"></div><div class="t" style="left:1075.00px;top:315.94px;font-size:9.88px;color:#555;font-weight:normal;">Svg-table-trees-craft...</div><div class="abs" style="left:1012px;top:337px;width:178px;height:1px;background:#ffffff"></div><svg class="abs" style="left:1020px;top:349.1px" width="32" height="12" viewBox="0 0 32 12"><path d="M2.5 4.5 L5 7 L7.5 4.5" fill="none" stroke="#444" stroke-width="1.2"/><path d="M22 3 H20 Q17 3 17 6 Q17 9 20 9 H26 Q28.5 9 28.5 6.5 Q28.5 4.5 26.5 4.5 H20.5 Q19.5 4.5 19.5 6 Q19.5 7.3 20.5 7.3 H25" fill="none" stroke="#444" stroke-width="1.2"/><path d="M24 3 H26" stroke="#444" stroke-width="1.2"/></svg><div class="t" style="left:1055.00px;top:351.16px;font-size:10.09px;color:#555;font-weight:normal;">Attach</div><svg class="abs" style="left:1056px;top:383px" width="13" height="14" viewBox="0 0 13 14"><path d="M9.5 3.5 Q9.5 1 7 1 Q4.5 1 4.5 3.5 Q4.5 5.5 7 7 Q9.5 8.5 9.5 10.5 Q9.5 13 7 13 Q4.5 13 4.5 10.5" fill="none" stroke="#bfe0d4" stroke-width="1.1"/><circle cx="4.5" cy="10.3" r="2.3" fill="none" stroke="#bfe0d4" stroke-width="1"/></svg><div class="t" style="left:1075.00px;top:386.37px;font-size:9.36px;color:#555;font-weight:normal;">Sarah</div><div class="t" style="left:1075.00px;top:421.21px;font-size:9.91px;color:#555;font-weight:normal;">Svg-table-reindeer-cr...</div><div class="abs" style="left:1055.5px;top:453.6px;width:13.6px;height:14.8px;background:#fcc882"></div><div class="t" style="left:1075.00px;top:456.91px;font-size:9.91px;color:#555;font-weight:normal;">Svg-table-reindeer-cr...</div><div class="abs" style="left:1012px;top:551px;width:188px;height:32.5px;background:#f1f1f1"></div><div class="abs" style="left:1018.3px;top:556.3px;width:33.4px;height:22.4px;background:#fff;border:1px solid #c9c9c9;border-radius:2px"></div><div class="t" style="left:1058.00px;top:564.29px;font-size:6.27px;color:#666;font-weight:normal;">Blank Canvas</div><div class="abs" style="left:1012px;top:583.5px;width:188px;height:30px;background:#fff"></div><div class="t" style="left:1022.30px;top:601.74px;font-size:6.45px;color:#cfcfcf;font-weight:normal;">Slice</div><div class="t" style="left:1047.00px;top:601.55px;font-size:6.68px;color:#555;font-weight:normal;">Combine</div><div class="t" style="left:1083.70px;top:601.86px;font-size:6.31px;color:#555;font-weight:normal;">Detach</div><div class="t" style="left:1115.00px;top:601.85px;font-size:6.32px;color:#cfcfcf;font-weight:normal;">Flatten</div><div class="t" style="left:1145.00px;top:601.66px;font-size:6.54px;color:#cfcfcf;font-weight:normal;">Contour</div><svg class="abs" style="left:1012px;top:583px" width="188" height="18" viewBox="0 0 188 18"><g fill="none" stroke="#d0d0d0" stroke-width="1"><circle cx="15.5" cy="7.5" r="3.5"/><path d="M12 11 V13.5 H20.5 V6.5 H18"/></g><g fill="none" stroke="#333" stroke-width="1.1"><rect x="40.5" y="3" width="6.5" height="6.5"/><circle cx="46.5" cy="10" r="3.6"/></g><path d="M53 8 H57 L55 10.3 Z" fill="#222"/><g fill="none" stroke="#333" stroke-width="1.2"><path d="M79 6 Q82 3 85 6 H88 Q90 6.5 89.5 8.5 Q88.5 10.5 86 10 H82 Q79 10 78.5 8 Z"/><path d="M77 3 L89 13"/></g><g fill="none" stroke="#d0d0d0" stroke-width="1"><path d="M113 2 V7 M111 5 L113 7.3 L115 5 M107.5 7.5 L113 11 L118.5 7.5 M107.5 10.5 L113 14 L118.5 10.5"/></g><circle cx="144.3" cy="9" r="5.5" fill="none" stroke="#d0d0d0" stroke-width="1.1" stroke-dasharray="2 1.6"/></svg><div class="abs" style="left:1012px;top:613.5px;width:188px;height:30.5px;background:#0a4ec1"></div><svg class="abs" style="left:1021px;top:621px" width="23" height="18" viewBox="0 0 23 18"><path d="M2 1.5 H21.5 L17.5 16.5 H1.5 V15.5 L4 12.5 H2 Z" fill="#14a874"/><path d="M8.5 6.5 V5.2 Q8.5 3.5 10.5 3.5 Q12.5 3.5 12.5 5.2 V6.5" fill="none" stroke="#fff" stroke-width="0.9"/><rect x="7.8" y="6.3" width="5.4" height="4.5" rx="0.6" fill="#fff"/></svg><div class="t" style="left:1047.70px;top:625.36px;font-size:8.67px;color:#fff;font-weight:normal;">Want £10 + FREE shipping?</div><svg class="abs" style="left:0;top:0" width="1200" height="644"><rect x="144.9" y="98.6" width="177.0" height="194.6" fill="#fdc883" stroke="#b59262" stroke-width="1"/><g transform="translate(210 125) scale(0.124224)" fill="none" stroke="#9b7b52" stroke-width="8" stroke-linecap="round"><path d="M372 418 C300 375 200 320 150 260 C110 210 100 160 112 115 C140 140 130 200 165 222 C170 205 172 185 180 172 C195 210 210 262 262 275 C288 262 290 220 300 192 C322 232 318 290 350 322 C372 342 392 322 410 286 C425 330 418 378 398 405 M372 418 C330 388 272 380 268 410 C265 450 312 468 345 468 L356 572 M398 405 Q457.5 368 517 405"/><path d="M372 418 C300 375 200 320 150 260 C110 210 100 160 112 115 C140 140 130 200 165 222 C170 205 172 185 180 172 C195 210 210 262 262 275 C288 262 290 220 300 192 C322 232 318 290 350 322 C372 342 392 322 410 286 C425 330 418 378 398 405 M372 418 C330 388 272 380 268 410 C265 450 312 468 345 468 L356 572 M398 405 Q457.5 368 517 405" transform="translate(915 0) scale(-1 1)"/><circle cx="410" cy="525" r="17" fill="#fff" stroke-width="6"/><circle cx="520" cy="525" r="17" fill="#fff" stroke-width="6"/></g><line x1="145.5" y1="196.0" x2="322" y2="196.0" stroke="#9c7b52" stroke-width="1.1" stroke-dasharray="4.6 4.2"/><path d="M153.7 203.6 C152.7 201.5 150.7 201.8 150.5 204.4 C150.29999999999998 206.4 149.39999999999998 208.4 149.7 210.4 C149.89999999999998 212.4 151.2 213.3 152.5 212.6 L153.7 210.8 L154.89999999999998 212.6 C156.2 213.3 157.5 212.4 157.7 210.4 C158.0 208.4 157.1 206.4 156.89999999999998 204.4 C156.7 201.8 154.7 201.5 153.7 203.6 Z" fill="#fff" stroke="#9b7b52" stroke-width="0.8"/><path d="M153.7 203.6 L153.7 206.20000000000002 M153.7 210.8 L153.7 208.6" stroke="#9b7b52" stroke-width="0.7"/><path d="M153.7 224.6 C152.7 222.5 150.7 222.8 150.5 225.4 C150.29999999999998 227.4 149.39999999999998 229.4 149.7 231.4 C149.89999999999998 233.4 151.2 234.3 152.5 233.6 L153.7 231.8 L154.89999999999998 233.6 C156.2 234.3 157.5 233.4 157.7 231.4 C158.0 229.4 157.1 227.4 156.89999999999998 225.4 C156.7 222.8 154.7 222.5 153.7 224.6 Z" fill="#fff" stroke="#9b7b52" stroke-width="0.8"/><path d="M153.7 224.6 L153.7 227.20000000000002 M153.7 231.8 L153.7 229.6" stroke="#9b7b52" stroke-width="0.7"/><path d="M153.7 245.5 C152.7 243.4 150.7 243.70000000000002 150.5 246.3 C150.29999999999998 248.3 149.39999999999998 250.3 149.7 252.3 C149.89999999999998 254.3 151.2 255.20000000000002 152.5 254.5 L153.7 252.70000000000002 L154.89999999999998 254.5 C156.2 255.20000000000002 157.5 254.3 157.7 252.3 C158.0 250.3 157.1 248.3 156.89999999999998 246.3 C156.7 243.70000000000002 154.7 243.4 153.7 245.5 Z" fill="#fff" stroke="#9b7b52" stroke-width="0.8"/><path d="M153.7 245.5 L153.7 248.10000000000002 M153.7 252.70000000000002 L153.7 250.5" stroke="#9b7b52" stroke-width="0.7"/><path d="M153.7 266.5 C152.7 264.40000000000003 150.7 264.7 150.5 267.3 C150.29999999999998 269.3 149.39999999999998 271.3 149.7 273.3 C149.89999999999998 275.3 151.2 276.2 152.5 275.5 L153.7 273.7 L154.89999999999998 275.5 C156.2 276.2 157.5 275.3 157.7 273.3 C158.0 271.3 157.1 269.3 156.89999999999998 267.3 C156.7 264.7 154.7 264.40000000000003 153.7 266.5 Z" fill="#fff" stroke="#9b7b52" stroke-width="0.8"/><path d="M153.7 266.5 L153.7 269.1 M153.7 273.7 L153.7 271.5" stroke="#9b7b52" stroke-width="0.7"/><path d="M162.5 214.5 C161.5 212.4 159.5 212.70000000000002 159.3 215.3 C159.1 217.3 158.2 219.3 158.5 221.3 C158.7 223.3 160.0 224.20000000000002 161.3 223.5 L162.5 221.70000000000002 L163.7 223.5 C165.0 224.20000000000002 166.3 223.3 166.5 221.3 C166.8 219.3 165.9 217.3 165.7 215.3 C165.5 212.70000000000002 163.5 212.4 162.5 214.5 Z" fill="#fff" stroke="#9b7b52" stroke-width="0.8"/><path d="M162.5 214.5 L162.5 217.10000000000002 M162.5 221.70000000000002 L162.5 219.5" stroke="#9b7b52" stroke-width="0.7"/><path d="M162.5 236.2 C161.5 234.1 159.5 234.4 159.3 237.0 C159.1 239.0 158.2 241.0 158.5 243.0 C158.7 245.0 160.0 245.9 161.3 245.2 L162.5 243.4 L163.7 245.2 C165.0 245.9 166.3 245.0 166.5 243.0 C166.8 241.0 165.9 239.0 165.7 237.0 C165.5 234.4 163.5 234.1 162.5 236.2 Z" fill="#fff" stroke="#9b7b52" stroke-width="0.8"/><path d="M162.5 236.2 L162.5 238.8 M162.5 243.4 L162.5 241.2" stroke="#9b7b52" stroke-width="0.7"/><path d="M162.5 256.4 C161.5 254.29999999999998 159.5 254.6 159.3 257.2 C159.1 259.2 158.2 261.2 158.5 263.2 C158.7 265.2 160.0 266.09999999999997 161.3 265.4 L162.5 263.59999999999997 L163.7 265.4 C165.0 266.09999999999997 166.3 265.2 166.5 263.2 C166.8 261.2 165.9 259.2 165.7 257.2 C165.5 254.6 163.5 254.29999999999998 162.5 256.4 Z" fill="#fff" stroke="#9b7b52" stroke-width="0.8"/><path d="M162.5 256.4 L162.5 259.0 M162.5 263.59999999999997 L162.5 261.4" stroke="#9b7b52" stroke-width="0.7"/><path d="M162.5 276.59999999999997 C161.5 274.5 159.5 274.79999999999995 159.3 277.4 C159.1 279.4 158.2 281.4 158.5 283.4 C158.7 285.4 160.0 286.29999999999995 161.3 285.59999999999997 L162.5 283.79999999999995 L163.7 285.59999999999997 C165.0 286.29999999999995 166.3 285.4 166.5 283.4 C166.8 281.4 165.9 279.4 165.7 277.4 C165.5 274.79999999999995 163.5 274.5 162.5 276.59999999999997 Z" fill="#fff" stroke="#9b7b52" stroke-width="0.8"/><path d="M162.5 276.59999999999997 L162.5 279.2 M162.5 283.79999999999995 L162.5 281.59999999999997" stroke="#9b7b52" stroke-width="0.7"/><g transform="translate(180 215) scale(0.112486)"><path d="M300 185 C332 150 312 88 250 88 C185 86 168 160 215 225 C258 285 288 352 245 405 C205 452 92 440 62 365 C40 300 100 235 165 250 C205 262 195 322 155 330" fill="none" stroke="#3f9a6c" stroke-width="9.5" stroke-linecap="round" stroke-linejoin="round"/></g><path d="M237.5 240.8 C233.5 237.6 223.5 237.2 219 244.5 C215 251 215.8 259.6 221.3 259.3 C226.5 259 232.5 252.5 235.8 245.5 L231.8 258.5 C236 252 240 245 243.8 238.5 C245.5 236.2 247 239.5 244.6 240.6 L250.8 244.6 C249 248 247.8 253 249 258.4 C250.5 254 252.5 246 257 241.5 C260 239 268 238.5 274.1 241.5 C272.5 248 268.5 258.5 261.5 259.3 C255.5 259.8 250.8 255 252.5 249.5 C253.5 246.5 255 244 257 241.5 M274.1 241.5 L272.3 258.1 C278 250 286 238 290 225.8 C291 222 289.5 222.5 288.8 226 L281.7 257.9 C285 251 289.5 241.5 294.2 240.2 C297.5 239.5 298.2 242 297.5 245 C296.8 249 296 253 296.7 256 C297.3 259 299.5 259.8 301.5 257.5 C303.5 255 306 251 307.5 248.3" fill="none" stroke="#3f9a6c" stroke-width="1.07" stroke-linecap="round" stroke-linejoin="round"/><rect x="392.4" y="97.5" width="177.2" height="194.9" fill="#8ccaf4" stroke="#6a8aa2" stroke-width="1"/><path d="M424.10 147.40 Q427.43 159.37 433.60 164.50 Q431.50 165.40 429.40 164.20 Q431.82 173.65 436.30 177.70 Q434.20 178.60 432.10 177.40 Q434.48 186.43 438.90 190.30 Q431.50 191.30 424.10 191.10 Q416.70 191.30 409.30 190.30 Q413.72 186.43 416.10 177.40 Q414.00 178.60 411.90 177.70 Q416.38 173.65 418.80 164.20 Q416.70 165.40 414.60 164.50 Q420.78 159.37 424.10 147.40 Z" fill="#8ccaf4" stroke="#51748f" stroke-width="0.8" stroke-linejoin="round"/><path d="M536.90 147.40 Q540.23 159.37 546.40 164.50 Q544.30 165.40 542.20 164.20 Q544.62 173.65 549.10 177.70 Q547.00 178.60 544.90 177.40 Q547.28 186.43 551.70 190.30 Q544.30 191.30 536.90 191.10 Q529.50 191.30 522.10 190.30 Q526.52 186.43 528.90 177.40 Q526.80 178.60 524.70 177.70 Q529.18 173.65 531.60 164.20 Q529.50 165.40 527.40 164.50 Q533.57 159.37 536.90 147.40 Z" fill="#8ccaf4" stroke="#51748f" stroke-width="0.8" stroke-linejoin="round"/><path d="M449.70 131.80 Q453.83 147.06 461.50 153.60 Q459.25 154.50 457.00 153.30 Q459.87 164.92 465.20 169.90 Q462.80 170.80 460.40 169.60 Q463.13 181.08 468.20 186.00 Q458.95 187.00 449.70 186.80 Q440.45 187.00 431.20 186.00 Q436.27 181.08 439.00 169.60 Q436.60 170.80 434.20 169.90 Q439.53 164.92 442.40 153.30 Q440.15 154.50 437.90 153.60 Q445.57 147.06 449.70 131.80 Z" fill="#8ccaf4" stroke="#51748f" stroke-width="0.8" stroke-linejoin="round"/><path d="M511.30 131.80 Q515.43 147.06 523.10 153.60 Q520.85 154.50 518.60 153.30 Q521.47 164.92 526.80 169.90 Q524.40 170.80 522.00 169.60 Q524.73 181.08 529.80 186.00 Q520.55 187.00 511.30 186.80 Q502.05 187.00 492.80 186.00 Q497.87 181.08 500.60 169.60 Q498.20 170.80 495.80 169.90 Q501.13 164.92 504.00 153.30 Q501.75 154.50 499.50 153.60 Q507.17 147.06 511.30 131.80 Z" fill="#8ccaf4" stroke="#51748f" stroke-width="0.8" stroke-linejoin="round"/><path d="M480.60 124.00 Q486.48 139.82 497.40 146.60 Q494.15 147.50 490.90 146.30 Q495.28 160.37 503.40 166.40 Q499.40 167.30 495.40 166.10 Q499.88 180.03 508.20 186.00 Q494.40 187.00 480.60 186.80 Q466.80 187.00 453.00 186.00 Q461.32 180.03 465.80 166.10 Q461.80 167.30 457.80 166.40 Q465.93 160.37 470.30 146.30 Q467.05 147.50 463.80 146.60 Q474.72 139.82 480.60 124.00 Z" fill="#8ccaf4" stroke="#51748f" stroke-width="2.3" stroke-linejoin="round"/><path d="M480.60 124.00 Q486.48 139.82 497.40 146.60 Q494.15 147.50 490.90 146.30 Q495.28 160.37 503.40 166.40 Q499.40 167.30 495.40 166.10 Q499.88 180.03 508.20 186.00 Q494.40 187.00 480.60 186.80 Q466.80 187.00 453.00 186.00 Q461.32 180.03 465.80 166.10 Q461.80 167.30 457.80 166.40 Q465.93 160.37 470.30 146.30 Q467.05 147.50 463.80 146.60 Q474.72 139.82 480.60 124.00 Z" fill="#8ccaf4" stroke="#8ccaf4" stroke-width="0.8" stroke-linejoin="round"/><path d="M473.6 137.9 Q480 145 491.7 145.6" fill="none" stroke="#51748f" stroke-width="2.9" stroke-linecap="round"/><path d="M473.6 137.9 Q480 145 491.7 145.6" fill="none" stroke="#fff" stroke-width="2.0" stroke-linecap="round"/><path d="M491 155.3 Q484 164 466.6 165.1" fill="none" stroke="#51748f" stroke-width="2.9" stroke-linecap="round"/><path d="M491 155.3 Q484 164 466.6 165.1" fill="none" stroke="#fff" stroke-width="2.0" stroke-linecap="round"/><path d="M468 172.1 Q478 184 500.1 184" fill="none" stroke="#51748f" stroke-width="2.9" stroke-linecap="round"/><path d="M468 172.1 Q478 184 500.1 184" fill="none" stroke="#fff" stroke-width="2.0" stroke-linecap="round"/><path d="M480.60 108.40 L482.61 113.23 L487.83 113.65 L483.85 117.06 L485.07 122.15 L480.60 119.42 L476.13 122.15 L477.35 117.06 L473.37 113.65 L478.59 113.23 Z" fill="#8ccaf4" stroke="#51748f" stroke-width="0.85" stroke-linejoin="round"/><path d="M480.60 112.10 L481.74 114.83 L484.69 115.07 L482.44 117.00 L483.13 119.88 L480.60 118.34 L478.07 119.88 L478.76 117.00 L476.51 115.07 L479.46 114.83 Z" fill="#fff"/><path d="M452.0 144.4 Q452.77 145.82999999999998 454.2 146.6 Q452.77 147.37 452.0 148.79999999999998 Q451.23 147.37 449.8 146.6 Q451.23 145.82999999999998 452.0 144.4 Z" fill="#fff" stroke="#51748f" stroke-width="0.45"/><path d="M509.20000000000005 144.4 Q509.97 145.82999999999998 511.40000000000003 146.6 Q509.97 147.37 509.20000000000005 148.79999999999998 Q508.43000000000006 147.37 507.00000000000006 146.6 Q508.43000000000006 145.82999999999998 509.20000000000005 144.4 Z" fill="#fff" stroke="#51748f" stroke-width="0.45"/><path d="M445.8 150.60000000000002 Q446.57 152.03 448.0 152.8 Q446.57 153.57000000000002 445.8 155.0 Q445.03000000000003 153.57000000000002 443.6 152.8 Q445.03000000000003 152.03 445.8 150.60000000000002 Z" fill="#fff" stroke="#51748f" stroke-width="0.45"/><path d="M515.4000000000001 150.60000000000002 Q516.1700000000001 152.03 517.6000000000001 152.8 Q516.1700000000001 153.57000000000002 515.4000000000001 155.0 Q514.6300000000001 153.57000000000002 513.2 152.8 Q514.6300000000001 152.03 515.4000000000001 150.60000000000002 Z" fill="#fff" stroke="#51748f" stroke-width="0.45"/><path d="M450.5 157.60000000000002 Q451.27 159.03 452.7 159.8 Q451.27 160.57000000000002 450.5 162.0 Q449.73 160.57000000000002 448.3 159.8 Q449.73 159.03 450.5 157.60000000000002 Z" fill="#fff" stroke="#51748f" stroke-width="0.45"/><path d="M510.70000000000005 157.60000000000002 Q511.47 159.03 512.9000000000001 159.8 Q511.47 160.57000000000002 510.70000000000005 162.0 Q509.93000000000006 160.57000000000002 508.50000000000006 159.8 Q509.93000000000006 159.03 510.70000000000005 157.60000000000002 Z" fill="#fff" stroke="#51748f" stroke-width="0.45"/><path d="M444.3 164.60000000000002 Q445.07 166.03 446.5 166.8 Q445.07 167.57000000000002 444.3 169.0 Q443.53000000000003 167.57000000000002 442.1 166.8 Q443.53000000000003 166.03 444.3 164.60000000000002 Z" fill="#fff" stroke="#51748f" stroke-width="0.45"/><path d="M516.9000000000001 164.60000000000002 Q517.6700000000001 166.03 519.1000000000001 166.8 Q517.6700000000001 167.57000000000002 516.9000000000001 169.0 Q516.1300000000001 167.57000000000002 514.7 166.8 Q516.1300000000001 166.03 516.9000000000001 164.60000000000002 Z" fill="#fff" stroke="#51748f" stroke-width="0.45"/><path d="M453.6 171.60000000000002 Q454.37 173.03 455.8 173.8 Q454.37 174.57000000000002 453.6 176.0 Q452.83000000000004 174.57000000000002 451.40000000000003 173.8 Q452.83000000000004 173.03 453.6 171.60000000000002 Z" fill="#fff" stroke="#51748f" stroke-width="0.45"/><path d="M507.6 171.60000000000002 Q508.37 173.03 509.8 173.8 Q508.37 174.57000000000002 507.6 176.0 Q506.83000000000004 174.57000000000002 505.40000000000003 173.8 Q506.83000000000004 173.03 507.6 171.60000000000002 Z" fill="#fff" stroke="#51748f" stroke-width="0.45"/><path d="M446.6 177.10000000000002 Q447.37 178.53 448.8 179.3 Q447.37 180.07000000000002 446.6 181.5 Q445.83000000000004 180.07000000000002 444.40000000000003 179.3 Q445.83000000000004 178.53 446.6 177.10000000000002 Z" fill="#fff" stroke="#51748f" stroke-width="0.45"/><path d="M514.6 177.10000000000002 Q515.37 178.53 516.8000000000001 179.3 Q515.37 180.07000000000002 514.6 181.5 Q513.83 180.07000000000002 512.4 179.3 Q513.83 178.53 514.6 177.10000000000002 Z" fill="#fff" stroke="#51748f" stroke-width="0.45"/><path d="M440.4 181.0 Q441.16999999999996 182.42999999999998 442.59999999999997 183.2 Q441.16999999999996 183.97 440.4 185.39999999999998 Q439.63 183.97 438.2 183.2 Q439.63 182.42999999999998 440.4 181.0 Z" fill="#fff" stroke="#51748f" stroke-width="0.45"/><path d="M520.8000000000001 181.0 Q521.57 182.42999999999998 523.0000000000001 183.2 Q521.57 183.97 520.8000000000001 185.39999999999998 Q520.0300000000001 183.97 518.6 183.2 Q520.0300000000001 182.42999999999998 520.8000000000001 181.0 Z" fill="#fff" stroke="#51748f" stroke-width="0.45"/><path d="M416.10 194.6 V191.2 H421.10 M432.10 194.6 V191.2 H427.10 M440.70 194.6 V191.2 H445.70 M458.70 194.6 V191.2 H453.70 M470.60 194.6 V191.2 H475.60 M490.60 194.6 V191.2 H485.60 M502.30 194.6 V191.2 H507.30 M520.30 194.6 V191.2 H515.30 M528.90 194.6 V191.2 H533.90 M544.90 194.6 V191.2 H539.90" fill="none" stroke="#51748f" stroke-width="0.75"/><line x1="393" y1="194.8" x2="569" y2="194.8" stroke="#51748f" stroke-width="1.1" stroke-dasharray="4.6 4.2"/><text x="406" y="257" font-family="Liberation Sans" font-size="59" fill="none" stroke="#51748f" stroke-width="0.9" textLength="149.5" lengthAdjust="spacingAndGlyphs" style="letter-spacing:1px">Sarah</text><path d="M399.20 282.70 L414.20 279.90 L414.70 281.00 L425.40 279.30 L440.00 277.70 L440.40 279.20 L427.20 282.70 L440.40 286.20 L440.00 287.70 L425.40 286.10 L414.70 284.40 L414.20 285.50 Z" fill="#fff" stroke="#51748f" stroke-width="0.75" stroke-linejoin="round"/><path d="M438.30 282.70 L454.20 279.40 L454.90 280.40 L467.50 278.10 L468.20 279.20 L479.00 276.50 L481.00 277.80 L483.00 276.50 L493.80 279.20 L494.50 278.10 L507.10 280.40 L507.80 279.40 L523.70 282.70 L507.80 286.00 L507.10 285.00 L494.50 287.30 L493.80 286.20 L483.00 288.90 L481.00 287.60 L479.00 288.90 L468.20 286.20 L467.50 287.30 L454.90 285.00 L454.20 286.00 Z" fill="#fff" stroke="#51748f" stroke-width="0.75" stroke-linejoin="round"/><path d="M562.80 282.70 L547.80 279.90 L547.30 281.00 L536.60 279.30 L522.00 277.70 L521.60 279.20 L534.80 282.70 L521.60 286.20 L522.00 287.70 L536.60 286.10 L547.30 284.40 L547.80 285.50 Z" fill="#fff" stroke="#51748f" stroke-width="0.75" stroke-linejoin="round"/><line x1="480.5" y1="195.5" x2="480.5" y2="210" stroke="#7a98ad" stroke-width="0.6"/><rect x="388.0" y="93.8" width="7" height="7" fill="#fff" stroke="#777" stroke-width="1"/><rect x="565.5" y="93.8" width="7" height="7" fill="#fff" stroke="#777" stroke-width="1"/><rect x="388.0" y="289.0" width="7" height="7" fill="#fff" stroke="#777" stroke-width="1"/><rect x="565.5" y="289.0" width="7" height="7" fill="#fff" stroke="#777" stroke-width="1"/><rect x="632.4" y="97.2" width="177.2" height="194.9" fill="#8ccaf4" stroke="#6a8aa2" stroke-width="1"/><g transform="translate(240.5 0)"><path d="M424.10 147.40 Q427.43 159.37 433.60 164.50 Q431.50 165.40 429.40 164.20 Q431.82 173.65 436.30 177.70 Q434.20 178.60 432.10 177.40 Q434.48 186.43 438.90 190.30 Q431.50 191.30 424.10 191.10 Q416.70 191.30 409.30 190.30 Q413.72 186.43 416.10 177.40 Q414.00 178.60 411.90 177.70 Q416.38 173.65 418.80 164.20 Q416.70 165.40 414.60 164.50 Q420.78 159.37 424.10 147.40 Z" fill="#8ccaf4" stroke="#51748f" stroke-width="0.8" stroke-linejoin="round"/><path d="M536.90 147.40 Q540.23 159.37 546.40 164.50 Q544.30 165.40 542.20 164.20 Q544.62 173.65 549.10 177.70 Q547.00 178.60 544.90 177.40 Q547.28 186.43 551.70 190.30 Q544.30 191.30 536.90 191.10 Q529.50 191.30 522.10 190.30 Q526.52 186.43 528.90 177.40 Q526.80 178.60 524.70 177.70 Q529.18 173.65 531.60 164.20 Q529.50 165.40 527.40 164.50 Q533.57 159.37 536.90 147.40 Z" fill="#8ccaf4" stroke="#51748f" stroke-width="0.8" stroke-linejoin="round"/><path d="M449.70 131.80 Q453.83 147.06 461.50 153.60 Q459.25 154.50 457.00 153.30 Q459.87 164.92 465.20 169.90 Q462.80 170.80 460.40 169.60 Q463.13 181.08 468.20 186.00 Q458.95 187.00 449.70 186.80 Q440.45 187.00 431.20 186.00 Q436.27 181.08 439.00 169.60 Q436.60 170.80 434.20 169.90 Q439.53 164.92 442.40 153.30 Q440.15 154.50 437.90 153.60 Q445.57 147.06 449.70 131.80 Z" fill="#8ccaf4" stroke="#51748f" stroke-width="0.8" stroke-linejoin="round"/><path d="M511.30 131.80 Q515.43 147.06 523.10 153.60 Q520.85 154.50 518.60 153.30 Q521.47 164.92 526.80 169.90 Q524.40 170.80 522.00 169.60 Q524.73 181.08 529.80 186.00 Q520.55 187.00 511.30 186.80 Q502.05 187.00 492.80 186.00 Q497.87 181.08 500.60 169.60 Q498.20 170.80 495.80 169.90 Q501.13 164.92 504.00 153.30 Q501.75 154.50 499.50 153.60 Q507.17 147.06 511.30 131.80 Z" fill="#8ccaf4" stroke="#51748f" stroke-width="0.8" stroke-linejoin="round"/><path d="M480.60 124.00 Q486.48 139.82 497.40 146.60 Q494.15 147.50 490.90 146.30 Q495.28 160.37 503.40 166.40 Q499.40 167.30 495.40 166.10 Q499.88 180.03 508.20 186.00 Q494.40 187.00 480.60 186.80 Q466.80 187.00 453.00 186.00 Q461.32 180.03 465.80 166.10 Q461.80 167.30 457.80 166.40 Q465.93 160.37 470.30 146.30 Q467.05 147.50 463.80 146.60 Q474.72 139.82 480.60 124.00 Z" fill="#8ccaf4" stroke="#51748f" stroke-width="2.3" stroke-linejoin="round"/><path d="M480.60 124.00 Q486.48 139.82 497.40 146.60 Q494.15 147.50 490.90 146.30 Q495.28 160.37 503.40 166.40 Q499.40 167.30 495.40 166.10 Q499.88 180.03 508.20 186.00 Q494.40 187.00 480.60 186.80 Q466.80 187.00 453.00 186.00 Q461.32 180.03 465.80 166.10 Q461.80 167.30 457.80 166.40 Q465.93 160.37 470.30 146.30 Q467.05 147.50 463.80 146.60 Q474.72 139.82 480.60 124.00 Z" fill="#8ccaf4" stroke="#8ccaf4" stroke-width="0.8" stroke-linejoin="round"/><path d="M473.6 137.9 Q480 145 491.7 145.6" fill="none" stroke="#51748f" stroke-width="2.9" stroke-linecap="round"/><path d="M473.6 137.9 Q480 145 491.7 145.6" fill="none" stroke="#fff" stroke-width="2.0" stroke-linecap="round"/><path d="M491 155.3 Q484 164 466.6 165.1" fill="none" stroke="#51748f" stroke-width="2.9" stroke-linecap="round"/><path d="M491 155.3 Q484 164 466.6 165.1" fill="none" stroke="#fff" stroke-width="2.0" stroke-linecap="round"/><path d="M468 172.1 Q478 184 500.1 184" fill="none" stroke="#51748f" stroke-width="2.9" stroke-linecap="round"/><path d="M468 172.1 Q478 184 500.1 184" fill="none" stroke="#fff" stroke-width="2.0" stroke-linecap="round"/><path d="M480.60 108.40 L482.61 113.23 L487.83 113.65 L483.85 117.06 L485.07 122.15 L480.60 119.42 L476.13 122.15 L477.35 117.06 L473.37 113.65 L478.59 113.23 Z" fill="#8ccaf4" stroke="#51748f" stroke-width="0.85" stroke-linejoin="round"/><path d="M480.60 112.10 L481.74 114.83 L484.69 115.07 L482.44 117.00 L483.13 119.88 L480.60 118.34 L478.07 119.88 L478.76 117.00 L476.51 115.07 L479.46 114.83 Z" fill="#fff"/><path d="M452.0 144.4 Q452.77 145.82999999999998 454.2 146.6 Q452.77 147.37 452.0 148.79999999999998 Q451.23 147.37 449.8 146.6 Q451.23 145.82999999999998 452.0 144.4 Z" fill="#fff" stroke="#51748f" stroke-width="0.45"/><path d="M509.20000000000005 144.4 Q509.97 145.82999999999998 511.40000000000003 146.6 Q509.97 147.37 509.20000000000005 148.79999999999998 Q508.43000000000006 147.37 507.00000000000006 146.6 Q508.43000000000006 145.82999999999998 509.20000000000005 144.4 Z" fill="#fff" stroke="#51748f" stroke-width="0.45"/><path d="M445.8 150.60000000000002 Q446.57 152.03 448.0 152.8 Q446.57 153.57000000000002 445.8 155.0 Q445.03000000000003 153.57000000000002 443.6 152.8 Q445.03000000000003 152.03 445.8 150.60000000000002 Z" fill="#fff" stroke="#51748f" stroke-width="0.45"/><path d="M515.4000000000001 150.60000000000002 Q516.1700000000001 152.03 517.6000000000001 152.8 Q516.1700000000001 153.57000000000002 515.4000000000001 155.0 Q514.6300000000001 153.57000000000002 513.2 152.8 Q514.6300000000001 152.03 515.4000000000001 150.60000000000002 Z" fill="#fff" stroke="#51748f" stroke-width="0.45"/><path d="M450.5 157.60000000000002 Q451.27 159.03 452.7 159.8 Q451.27 160.57000000000002 450.5 162.0 Q449.73 160.57000000000002 448.3 159.8 Q449.73 159.03 450.5 157.60000000000002 Z" fill="#fff" stroke="#51748f" stroke-width="0.45"/><path d="M510.70000000000005 157.60000000000002 Q511.47 159.03 512.9000000000001 159.8 Q511.47 160.57000000000002 510.70000000000005 162.0 Q509.93000000000006 160.57000000000002 508.50000000000006 159.8 Q509.93000000000006 159.03 510.70000000000005 157.60000000000002 Z" fill="#fff" stroke="#51748f" stroke-width="0.45"/><path d="M444.3 164.60000000000002 Q445.07 166.03 446.5 166.8 Q445.07 167.57000000000002 444.3 169.0 Q443.53000000000003 167.57000000000002 442.1 166.8 Q443.53000000000003 166.03 444.3 164.60000000000002 Z" fill="#fff" stroke="#51748f" stroke-width="0.45"/><path d="M516.9000000000001 164.60000000000002 Q517.6700000000001 166.03 519.1000000000001 166.8 Q517.6700000000001 167.57000000000002 516.9000000000001 169.0 Q516.1300000000001 167.57000000000002 514.7 166.8 Q516.1300000000001 166.03 516.9000000000001 164.60000000000002 Z" fill="#fff" stroke="#51748f" stroke-width="0.45"/><path d="M453.6 171.60000000000002 Q454.37 173.03 455.8 173.8 Q454.37 174.57000000000002 453.6 176.0 Q452.83000000000004 174.57000000000002 451.40000000000003 173.8 Q452.83000000000004 173.03 453.6 171.60000000000002 Z" fill="#fff" stroke="#51748f" stroke-width="0.45"/><path d="M507.6 171.60000000000002 Q508.37 173.03 509.8 173.8 Q508.37 174.57000000000002 507.6 176.0 Q506.83000000000004 174.57000000000002 505.40000000000003 173.8 Q506.83000000000004 173.03 507.6 171.60000000000002 Z" fill="#fff" stroke="#51748f" stroke-width="0.45"/><path d="M446.6 177.10000000000002 Q447.37 178.53 448.8 179.3 Q447.37 180.07000000000002 446.6 181.5 Q445.83000000000004 180.07000000000002 444.40000000000003 179.3 Q445.83000000000004 178.53 446.6 177.10000000000002 Z" fill="#fff" stroke="#51748f" stroke-width="0.45"/><path d="M514.6 177.10000000000002 Q515.37 178.53 516.8000000000001 179.3 Q515.37 180.07000000000002 514.6 181.5 Q513.83 180.07000000000002 512.4 179.3 Q513.83 178.53 514.6 177.10000000000002 Z" fill="#fff" stroke="#51748f" stroke-width="0.45"/><path d="M440.4 181.0 Q441.16999999999996 182.42999999999998 442.59999999999997 183.2 Q441.16999999999996 183.97 440.4 185.39999999999998 Q439.63 183.97 438.2 183.2 Q439.63 182.42999999999998 440.4 181.0 Z" fill="#fff" stroke="#51748f" stroke-width="0.45"/><path d="M520.8000000000001 181.0 Q521.57 182.42999999999998 523.0000000000001 183.2 Q521.57 183.97 520.8000000000001 185.39999999999998 Q520.0300000000001 183.97 518.6 183.2 Q520.0300000000001 182.42999999999998 520.8000000000001 181.0 Z" fill="#fff" stroke="#51748f" stroke-width="0.45"/><path d="M416.10 194.6 V191.2 H421.10 M432.10 194.6 V191.2 H427.10 M440.70 194.6 V191.2 H445.70 M458.70 194.6 V191.2 H453.70 M470.60 194.6 V191.2 H475.60 M490.60 194.6 V191.2 H485.60 M502.30 194.6 V191.2 H507.30 M520.30 194.6 V191.2 H515.30 M528.90 194.6 V191.2 H533.90 M544.90 194.6 V191.2 H539.90" fill="none" stroke="#51748f" stroke-width="0.75"/></g><line x1="633" y1="194.8" x2="809" y2="194.8" stroke="#51748f" stroke-width="1.1" stroke-dasharray="4.6 4.2"/><path d="M639.20 282.70 L654.20 279.90 L654.70 281.00 L665.40 279.30 L680.00 277.70 L680.40 279.20 L667.20 282.70 L680.40 286.20 L680.00 287.70 L665.40 286.10 L654.70 284.40 L654.20 285.50 Z" fill="#fff" stroke="#51748f" stroke-width="0.75" stroke-linejoin="round"/><path d="M678.30 282.70 L694.20 279.40 L694.90 280.40 L707.50 278.10 L708.20 279.20 L719.00 276.50 L721.00 277.80 L723.00 276.50 L733.80 279.20 L734.50 278.10 L747.10 280.40 L747.80 279.40 L763.70 282.70 L747.80 286.00 L747.10 285.00 L734.50 287.30 L733.80 286.20 L723.00 288.90 L721.00 287.60 L719.00 288.90 L708.20 286.20 L707.50 287.30 L694.90 285.00 L694.20 286.00 Z" fill="#fff" stroke="#51748f" stroke-width="0.75" stroke-linejoin="round"/><path d="M802.80 282.70 L787.80 279.90 L787.30 281.00 L776.60 279.30 L762.00 277.70 L761.60 279.20 L774.80 282.70 L761.60 286.20 L762.00 287.70 L776.60 286.10 L787.30 284.40 L787.80 285.50 Z" fill="#fff" stroke="#51748f" stroke-width="0.75" stroke-linejoin="round"/></svg><div class="abs" style="left:466px;top:75.5px;width:29px;height:10px;background:#fff"></div><div class="t" style="left:469.70px;top:77.14px;font-size:7.52px;color:#777;font-weight:normal;">3.937"</div><div class="abs" style="left:584px;top:187px;width:29px;height:10px;background:#fff"></div><div class="t" style="left:588.20px;top:188.54px;font-size:7.27px;color:#777;font-weight:normal;">4.331"</div><div class="abs" style="left:999.6px;top:60px;width:11.5px;height:576px;background:#f1f1f1"></div><div class="abs" style="left:1000.4px;top:71px;width:9px;height:34px;background:#bdbdbd"></div><svg class="abs" style="left:999px;top:60px" width="12" height="576"><path d="M3 8.5 L5.5 5.5 L8 8.5 Z M3 566 L5.5 569 L8 566 Z" fill="#777"/></svg><div class="abs" style="left:43.5px;top:636px;width:956px;height:8px;background:#f1f1f1"></div><div class="abs" style="left:55px;top:636.5px;width:77.5px;height:7.5px;background:#bdbdbd"></div><svg class="abs" style="left:43px;top:636px" width="12" height="8"><path d="M6.5 1.5 L3.5 4 L6.5 6.5 Z" fill="#777"/></svg><svg class="abs" style="left:988px;top:636px" width="12" height="8"><path d="M5 1.5 L8 4 L5 6.5 Z" fill="#777"/></svg><div class="abs" style="left:78px;top:607px;width:64px;height:25px;border-radius:12px;background:rgba(240,240,240,0.6)"></div><div class="t" style="left:84.5px;top:614px;font-size:12px;color:#c4c4c4;font-weight:normal;">100%</div><svg class="abs" style="left:119px;top:612px" width="17" height="17"><circle cx="8.3" cy="8" r="6" fill="none" stroke="#c4c4c4" stroke-width="1.2"/><path d="M8.3 4.5 V11.5 M4.8 8 H11.8" stroke="#c4c4c4" stroke-width="1.2"/></svg><svg class="abs" style="left:0;top:0" width="200" height="644"><ellipse cx="60" cy="594.3" rx="49.1" ry="38.1" fill="#c9391e"/><g transform="translate(15 565) scale(0.075)" fill="none" stroke="#fff" stroke-linecap="round" stroke-linejoin="round"><path d="M335 125 C290 85 190 110 165 210 C140 310 200 392 290 392 C320 392 345 375 352 362" stroke-width="46"/><path d="M330 118 C300 70 170 70 110 125 C70 165 110 210 150 190 M230 130 C260 150 250 230 215 200" stroke-width="13"/><path d="M335 255 C365 235 385 262 372 305 L348 368 M368 292 C392 252 422 242 447 262" stroke-width="24"/><path d="M522 275 C470 250 412 300 422 350 C432 382 482 352 522 292 L502 362 C512 382 542 362 562 342" stroke-width="34"/><path d="M785 130 C765 88 702 98 672 170 C642 250 602 382 572 440 C552 470 522 462 542 432" stroke-width="36"/><path d="M598 270 H705 M700 262 H792" stroke-width="14"/><path d="M765 190 L722 352 C717 377 742 377 792 332" stroke-width="34"/><path d="M870 350 C950 330 1050 372 1132 322" stroke-width="14"/></g><text x="79.3" y="587.8" font-family="Liberation Serif" font-weight="bold" font-size="7.2" fill="#fff" textLength="20.5" lengthAdjust="spacingAndGlyphs">WITH</text><g transform="translate(15 590) scale(0.075)" fill="none" stroke="#fff" stroke-linecap="round" stroke-linejoin="round"><path d="M402 92 C362 40 300 90 330 162 C360 232 422 292 392 352 C352 422 252 422 242 362" stroke-width="42"/><path d="M300 232 C200 202 160 302 220 362 C260 402 300 402 312 412" stroke-width="13"/><path d="M522 222 C472 202 422 262 442 332 C462 372 502 322 532 252 L512 342 C517 372 552 352 572 332" stroke-width="34"/><path d="M585 232 C612 212 622 252 612 282 L592 352 M606 262 C632 222 662 222 682 242" stroke-width="24"/><path d="M762 222 C712 202 662 262 682 332 C702 372 742 322 772 252 L752 342 C757 372 792 352 812 332" stroke-width="34"/><path d="M962 102 C922 152 882 282 852 362" stroke-width="36"/><path d="M872 302 C902 232 962 222 962 282 C957 322 932 362 972 352 C992 342 1002 322 1007 302" stroke-width="30"/><path d="M650 150 C640 100 720 90 740 140 C750 180 700 190 690 160 M700 100 C800 90 900 130 960 160 C1010 180 1070 170 1070 120" stroke-width="10"/></g></svg><svg class="abs" style="left:0;top:0" width="1200" height="644"><path d="M868.7 100.3 H998.2 V90.2 L1017.7 104.8 L998.2 119.7 V109.7 H868.7 Z" fill="#cc3a1c"/></svg><svg class="abs" style="left:0;top:0" width="1200" height="644"><path d="M707.1 392.3 L707.1 399.8 L708.8 398.3 L710.3 401.6 L711.6 401 L710.2 397.9 L712.6 397.7 Z" fill="#000" stroke="#fff" stroke-width="0.3"/></svg></body></html>
